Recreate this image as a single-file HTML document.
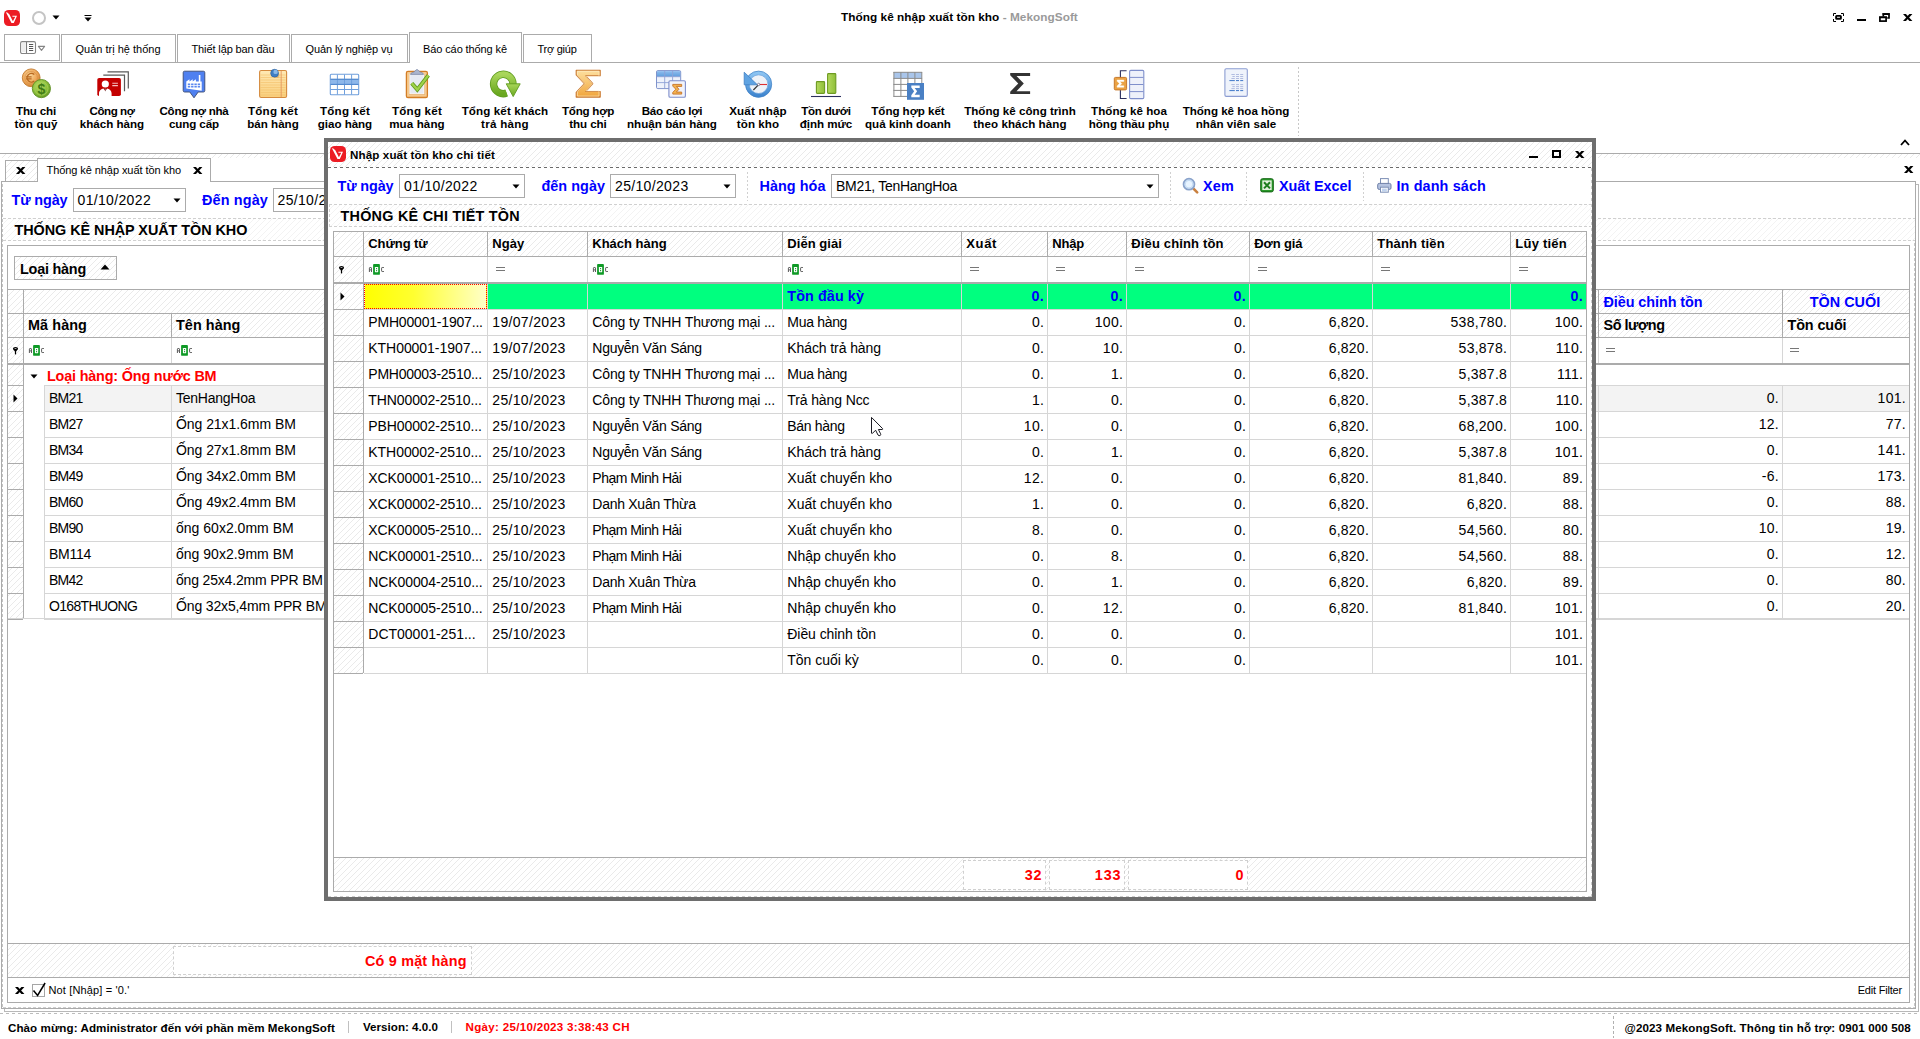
<!DOCTYPE html>
<html><head><meta charset="utf-8"><title>Thống kê nhập xuất tồn kho - MekongSoft</title>
<style>
html,body{margin:0;padding:0;background:#fff;}
body{width:1920px;height:1039px;overflow:hidden;position:relative;font-family:"Liberation Sans",sans-serif;}
#r{position:absolute;left:0;top:0;width:1920px;height:1039px;overflow:hidden;background:#fff;}
#r div,#r span.t,#r svg{position:absolute;box-sizing:border-box;}
span.t{white-space:nowrap;display:block;}
</style></head>
<body><div id="r">
<svg style="left:0;top:0" width="0" height="0"><defs><pattern id="hp" width="6" height="6" patternUnits="userSpaceOnUse"><path d="M0 5h1v1h-1zM1 4h1v1h-1zM2 3h1v1h-1zM3 2h1v1h-1zM4 1h1v1h-1zM5 0h1v1h-1z" fill="#eaeaea" shape-rendering="crispEdges"/></pattern><pattern id="hp2" width="6" height="6" patternUnits="userSpaceOnUse"><path d="M0 5h1v1h-1zM1 4h1v1h-1zM2 3h1v1h-1zM3 2h1v1h-1zM4 1h1v1h-1zM5 0h1v1h-1z" fill="#f3f3f3" shape-rendering="crispEdges"/></pattern></defs></svg>
<svg style="left:4px;top:10px" width="16" height="16" viewBox="0 0 16 16"><rect x="0" y="0" width="16" height="16" rx="4.6" fill="#ec1c24"/><path d="M1.900 2.200L3.300 2.500L5.300 4.200L8.900 11.200L11.300 6.800H8.400V5.800H13.000L9.800 12.900H7.500Z" fill="#fff"/></svg>
<div style="left:32px;top:11px;width:14px;height:14px;border:2px solid #c4c4c4;border-radius:50%"></div>
<svg style="left:52px;top:15px" width="8" height="5" viewBox="0 0 8 5"><path d="M0.5 0.5h7L4 4.5z" fill="#000"/></svg>
<svg style="left:84px;top:14px" width="8" height="8" viewBox="0 0 8 8"><rect x="0.5" y="1" width="7" height="1" fill="#000"/><path d="M0.5 3.5h7L4 7.5z" fill="#000"/></svg>
<span class="t" style="left:841px;top:9.4px;height:17px;line-height:17px;font-size:11.8px;font-weight:bold;color:#000;letter-spacing:0.04px">Thống kê nhập xuất tồn kho<span style="color:#9a9a9a"> - MekongSoft</span></span>
<svg style="left:1830px;top:10px" width="66" height="16" viewBox="1830 10 66 16"><path d="M1833.500 16V13.500H1836M1841 13.500H1843.500V16M1843.500 19V21.500H1841M1836 21.500H1833.500V19" stroke="#000" stroke-width="1" fill="none"/><rect x="1836.100" y="15.900" width="4.800" height="2.900" rx="0.6" fill="none" stroke="#000" stroke-width="1.900"/><rect x="1857" y="19" width="9" height="2" fill="#000"/><path d="M1883.300 16.500V14.200H1889V18H1887.200" stroke="#000" stroke-width="1.700" fill="none"/><path d="M1882.400 13.900H1889.800" stroke="#000" stroke-width="1.400"/><rect x="1879.900" y="17.400" width="6.200" height="3.700" fill="none" stroke="#000" stroke-width="1.700"/><path d="M1879.100 17H1886.900" stroke="#000" stroke-width="1.300"/></svg>
<svg style="left:1901.7px;top:13.0px" width="11.4" height="9.0" viewBox="-5.7 -4.5 11.4 9.0"><path d="M-4.7 -3.5H-1.7299999999999995L4.7 3.5H1.7299999999999995Z" fill="#000"/><path d="M4.7 -3.5H1.7299999999999995L-4.7 3.5H-1.7299999999999995Z" fill="#000"/></svg>
<div style="left:0px;top:62px;width:1920px;height:1px;background:#ababab"></div>
<div style="left:4px;top:34px;width:56px;height:27px;border:1px solid #ababab;background:#fff"></div>
<svg style="left:20px;top:40px" width="28" height="16" viewBox="0 0 28 16"><rect x="0.600" y="1.600" width="14.900" height="11.900" rx="1.600" fill="#fff" stroke="#848484" stroke-width="1.100"/><rect x="2" y="3" width="3.400" height="9" fill="#eeeeee"/><path d="M6.500 2v11" stroke="#7c7c7c" stroke-width="1.100"/><path d="M9 4.500h4.200M9 6.500h4.200M9 8.500h4.200M9 10.500h4.200" stroke="#555" stroke-width="1.100"/><path d="M18.400 6.400h6.200L21.500 10.300z" fill="#fff" stroke="#858585" stroke-width="1.100" stroke-linejoin="round"/></svg>
<div style="left:61px;top:34px;width:115px;height:28px;border:1px solid #ababab;border-bottom:none;background:#fff"></div>
<span class="t" style="top:42.0px;height:15px;line-height:15px;font-size:11px;color:#000;letter-spacing:0.000px;left:75.5px;">Quản trị hệ thống</span>
<div style="left:177px;top:34px;width:113px;height:28px;border:1px solid #ababab;border-bottom:none;background:#fff"></div>
<span class="t" style="top:42.0px;height:15px;line-height:15px;font-size:11px;color:#000;letter-spacing:-0.118px;left:191.5px;">Thiết lập ban đầu</span>
<div style="left:291px;top:34px;width:117px;height:28px;border:1px solid #ababab;border-bottom:none;background:#fff"></div>
<span class="t" style="top:42.0px;height:15px;line-height:15px;font-size:11px;color:#000;letter-spacing:-0.098px;left:305.5px;">Quản lý nghiệp vụ</span>
<div style="left:409px;top:32px;width:113px;height:31px;border:1px solid #ababab;border-bottom:none;background:#fff"></div>
<span class="t" style="top:42.0px;height:15px;line-height:15px;font-size:11px;color:#000;letter-spacing:-0.101px;left:423px;">Báo cáo thống kê</span>
<div style="left:523px;top:34px;width:69px;height:28px;border:1px solid #ababab;border-bottom:none;background:#fff"></div>
<span class="t" style="top:42.0px;height:15px;line-height:15px;font-size:11px;color:#000;letter-spacing:-0.255px;left:537.5px;">Trợ giúp</span>
<span class="t" style="top:103.0px;height:16px;line-height:16px;font-size:11.6px;color:#000;letter-spacing:-0.176px;font-weight:bold;left:16.0px;">Thu chi</span>
<span class="t" style="top:116.0px;height:16px;line-height:16px;font-size:11.6px;color:#000;letter-spacing:0.161px;font-weight:bold;left:14.5px;">tồn quỹ</span>
<span class="t" style="top:103.0px;height:16px;line-height:16px;font-size:11.6px;color:#000;letter-spacing:-0.455px;font-weight:bold;left:89.5px;">Công nợ</span>
<span class="t" style="top:116.0px;height:16px;line-height:16px;font-size:11.6px;color:#000;letter-spacing:-0.015px;font-weight:bold;left:79.85px;">khách hàng</span>
<span class="t" style="top:103.0px;height:16px;line-height:16px;font-size:11.6px;color:#000;letter-spacing:-0.275px;font-weight:bold;left:159.5px;">Công nợ nhà</span>
<span class="t" style="top:116.0px;height:16px;line-height:16px;font-size:11.6px;color:#000;letter-spacing:-0.114px;font-weight:bold;left:169.0px;">cung cấp</span>
<span class="t" style="top:103.0px;height:16px;line-height:16px;font-size:11.6px;color:#000;letter-spacing:0.210px;font-weight:bold;left:248.0px;">Tổng kết</span>
<span class="t" style="top:116.0px;height:16px;line-height:16px;font-size:11.6px;color:#000;letter-spacing:0.019px;font-weight:bold;left:247.15px;">bán hàng</span>
<span class="t" style="top:103.0px;height:16px;line-height:16px;font-size:11.6px;color:#000;letter-spacing:0.210px;font-weight:bold;left:320.0px;">Tổng kết</span>
<span class="t" style="top:116.0px;height:16px;line-height:16px;font-size:11.6px;color:#000;letter-spacing:-0.052px;font-weight:bold;left:317.85px;">giao hàng</span>
<span class="t" style="top:103.0px;height:16px;line-height:16px;font-size:11.6px;color:#000;letter-spacing:0.210px;font-weight:bold;left:392.0px;">Tổng kết</span>
<span class="t" style="top:116.0px;height:16px;line-height:16px;font-size:11.6px;color:#000;letter-spacing:0.115px;font-weight:bold;left:389.15px;">mua hàng</span>
<span class="t" style="top:103.0px;height:16px;line-height:16px;font-size:11.6px;color:#000;letter-spacing:0.117px;font-weight:bold;left:461.65px;">Tổng kết khách</span>
<span class="t" style="top:116.0px;height:16px;line-height:16px;font-size:11.6px;color:#000;letter-spacing:0.281px;font-weight:bold;left:481.0px;">trả hàng</span>
<span class="t" style="top:103.0px;height:16px;line-height:16px;font-size:11.6px;color:#000;letter-spacing:-0.247px;font-weight:bold;left:562.0px;">Tổng hợp</span>
<span class="t" style="top:116.0px;height:16px;line-height:16px;font-size:11.6px;color:#000;letter-spacing:-0.102px;font-weight:bold;left:569.35px;">thu chi</span>
<span class="t" style="top:103.0px;height:16px;line-height:16px;font-size:11.6px;color:#000;letter-spacing:-0.212px;font-weight:bold;left:641.65px;">Báo cáo lợi</span>
<span class="t" style="top:116.0px;height:16px;line-height:16px;font-size:11.6px;color:#000;letter-spacing:0.032px;font-weight:bold;left:627.0px;">nhuận bán hàng</span>
<span class="t" style="top:103.0px;height:16px;line-height:16px;font-size:11.6px;color:#000;letter-spacing:0.182px;font-weight:bold;left:729.15px;">Xuất nhập</span>
<span class="t" style="top:116.0px;height:16px;line-height:16px;font-size:11.6px;color:#000;letter-spacing:0.061px;font-weight:bold;left:736.85px;">tồn kho</span>
<span class="t" style="top:103.0px;height:16px;line-height:16px;font-size:11.6px;color:#000;letter-spacing:-0.216px;font-weight:bold;left:801.15px;">Tồn dưới</span>
<span class="t" style="top:116.0px;height:16px;line-height:16px;font-size:11.6px;color:#000;letter-spacing:-0.071px;font-weight:bold;left:799.85px;">định mức</span>
<span class="t" style="top:103.0px;height:16px;line-height:16px;font-size:11.6px;color:#000;letter-spacing:-0.055px;font-weight:bold;left:871.35px;">Tổng hợp kết</span>
<span class="t" style="top:116.0px;height:16px;line-height:16px;font-size:11.6px;color:#000;letter-spacing:0.022px;font-weight:bold;left:865.0px;">quả kinh doanh</span>
<span class="t" style="top:103.0px;height:16px;line-height:16px;font-size:11.6px;color:#000;letter-spacing:0.012px;font-weight:bold;left:964.15px;">Thống kê công trình</span>
<span class="t" style="top:116.0px;height:16px;line-height:16px;font-size:11.6px;color:#000;letter-spacing:0.077px;font-weight:bold;left:973.35px;">theo khách hàng</span>
<span class="t" style="top:103.0px;height:16px;line-height:16px;font-size:11.6px;color:#000;letter-spacing:0.051px;font-weight:bold;left:1091.0px;">Thống kê hoa</span>
<span class="t" style="top:116.0px;height:16px;line-height:16px;font-size:11.6px;color:#000;letter-spacing:0.014px;font-weight:bold;left:1088.65px;">hồng thầu phụ</span>
<span class="t" style="top:103.0px;height:16px;line-height:16px;font-size:11.6px;color:#000;letter-spacing:-0.015px;font-weight:bold;left:1182.65px;">Thống kê hoa hồng</span>
<span class="t" style="top:116.0px;height:16px;line-height:16px;font-size:11.6px;color:#000;letter-spacing:0.055px;font-weight:bold;left:1195.65px;">nhân viên sale</span>
<div style="left:1298px;top:67px;width:1px;height:69px;background:repeating-linear-gradient(180deg,#c8c8c8 0,#c8c8c8 2px,transparent 2px,transparent 4px)"></div>
<svg style="left:0;top:0" width="0" height="0"><defs>
<radialGradient id="gOr" cx="0.4" cy="0.35" r="0.7"><stop offset="0" stop-color="#fbd9a0"/><stop offset="0.6" stop-color="#eda758"/><stop offset="1" stop-color="#c97a2c"/></radialGradient>
<radialGradient id="gGr" cx="0.4" cy="0.35" r="0.7"><stop offset="0" stop-color="#b9dc6a"/><stop offset="0.6" stop-color="#8cbf3a"/><stop offset="1" stop-color="#5f9420"/></radialGradient>
<linearGradient id="gNote" x1="0" y1="0" x2="0" y2="1"><stop offset="0" stop-color="#ffe9b4"/><stop offset="1" stop-color="#f9cf7c"/></linearGradient>
<linearGradient id="gSig" x1="0" y1="0" x2="0" y2="1"><stop offset="0" stop-color="#fde0a0"/><stop offset="1" stop-color="#f0a43a"/></linearGradient>
<linearGradient id="gGreen" x1="0" y1="0" x2="0" y2="1"><stop offset="0" stop-color="#a9d65a"/><stop offset="1" stop-color="#6aa820"/></linearGradient>
<linearGradient id="gBlue" x1="0" y1="0" x2="0" y2="1"><stop offset="0" stop-color="#8cc4f2"/><stop offset="1" stop-color="#3f86cf"/></linearGradient>
<linearGradient id="gBar" x1="0" y1="0" x2="1" y2="0"><stop offset="0" stop-color="#b4d95e"/><stop offset="1" stop-color="#8fbf38"/></linearGradient>
<linearGradient id="gHdr" x1="0" y1="0" x2="0" y2="1"><stop offset="0" stop-color="#8fbdee"/><stop offset="1" stop-color="#5f9ddc"/></linearGradient>
</defs></svg>
<svg style="left:18px;top:66px" width="40" height="36" viewBox="18 66 40 36"><circle cx="31.2" cy="77.8" r="8.9" fill="url(#gOr)" stroke="#c27a30" stroke-width="0.9"/>
<circle cx="31.2" cy="77.8" r="6.3" fill="none" stroke="#d9924a" stroke-width="0.8"/>
<path d="M34.3 74.6a4.3 4.3 0 1 0 0 6.4M26 76.8h5.6M26 78.9h5.6" stroke="#b96a22" stroke-width="1.3" fill="none"/>
<circle cx="41.4" cy="88.6" r="9.1" fill="url(#gGr)" stroke="#5e8f22" stroke-width="0.9"/>
<circle cx="41.4" cy="88.6" r="6.6" fill="none" stroke="#a4cf55" stroke-width="0.8"/>
<text x="41.4" y="93.6" text-anchor="middle" font-family="Liberation Sans" font-weight="bold" font-size="14" fill="#3f7a14">$</text></svg>
<svg style="left:94px;top:66px" width="40" height="36" viewBox="94 66 40 36"><path d="M107.5 71.9h20.8v16.6" stroke="#5a5a5a" stroke-width="1.2" fill="none"/>
<path d="M103.3 75.2h21.2v16" stroke="#5a5a5a" stroke-width="1.2" fill="none"/>
<rect x="97.3" y="78" width="23.6" height="18" rx="1.8" fill="#c40000"/>
<circle cx="105.3" cy="84" r="3.6" fill="#fff"/>
<path d="M99 96v-2.5c0-3 2.4-4.8 4.4-5l1.9 2.6l1.9-2.6c2 .2 4.4 2 4.4 5v2.5z" fill="#fff"/>
<path d="M104.5 88.6h1.6l-.8 3.2z" fill="#777"/>
<path d="M112.3 83.2h5.6M112.3 85.6h5.6" stroke="#f4c0c0" stroke-width="1.1"/></svg>
<svg style="left:178px;top:66px" width="40" height="36" viewBox="178 66 40 36"><path d="M184.6 71.2h18.8a1.4 1.4 0 0 1 1.4 1.4v18a1.4 1.4 0 0 1 -1.4 1.4h-5.2l-4.2 5.8l-4.2-5.8h-5.2a1.4 1.4 0 0 1 -1.4-1.4v-18a1.4 1.4 0 0 1 1.4-1.4z" fill="#4f80f0" stroke="#3a4a70" stroke-width="0.9"/>
<path d="M186.3 88.6v-7.2l3.2-2.2v2.2l3.2-2.2v2.2l3.2-2.2v2.2h2.9v-6.3h1.6v6.3l1.3 0v9.4z" fill="#fff"/>
<path d="M187.8 83.5h2.4v1.7h-2.4zM191.1 83.5h2.4v1.7h-2.4zM194.4 83.5h2.4v1.7h-2.4zM197.7 83.5h2.4v1.7h-2.4zM187.8 86h2.4v1.5h-2.4zM191.1 86h2.4v1.5h-2.4zM194.4 86h2.4v1.5h-2.4zM197.7 86h2.4v1.5h-2.4z" fill="#5b88f0"/></svg>
<svg style="left:255px;top:66px" width="40" height="36" viewBox="255 66 40 36"><rect x="259.6" y="70.5" width="27" height="27" rx="1.6" fill="url(#gNote)" stroke="#d58a3e" stroke-width="1.1"/>
<path d="M260.5 75h25M260.5 77.5h25M260.5 80h25M260.5 82.5h25M260.5 85h25M260.5 87.5h25M260.5 90h25M260.5 92.5h25M260.5 95h25" stroke="#f3c06a" stroke-width="0.6"/>
<path d="M281.2 71v26" stroke="#e2905a" stroke-width="0.8"/>
<ellipse cx="276.2" cy="75.4" rx="3.2" ry="2.6" fill="#d9a860" opacity="0.6"/>
<circle cx="274.6" cy="73.2" r="3.9" fill="#3f7fc4" stroke="#2f64a2" stroke-width="0.7"/>
<circle cx="275.6" cy="71.9" r="2.2" fill="#8ab9e8"/></svg>
<svg style="left:326px;top:66px" width="40" height="36" viewBox="326 66 40 36"><rect x="330.3" y="74.3" width="28.4" height="20.4" rx="1" fill="#fff" stroke="#6f9fdc" stroke-width="1.1"/>
<rect x="330.9" y="79.3" width="27.2" height="5.1" fill="#8db7ea"/>
<path d="M330.5 79.3h28M330.5 84.4h28M330.5 89.5h28M337.4 74.5v20M344.5 74.5v20M351.6 74.5v20" stroke="#6f9fdc" stroke-width="1"/>
<path d="M330.5 79.3h28M330.5 84.4h28" stroke="#4f86cc" stroke-width="1"/></svg>
<svg style="left:400px;top:66px" width="40" height="36" viewBox="400 66 40 36"><rect x="406.4" y="71.3" width="21" height="26.2" rx="1.6" fill="#f6c98c" stroke="#d37d26" stroke-width="1.3"/>
<rect x="409" y="74" width="15.8" height="20.6" fill="#d99a52"/>
<rect x="409.8" y="74.2" width="14.2" height="19.6" fill="#e6eaf3" stroke="#fff" stroke-width="0.8"/>
<path d="M410.400 74.400c0.200-1.800 3-1.900 4.200-2.900c.8-.7 1.200-1.900 2.400-1.900s1.600 1.200 2.400 1.900c1.200 1 4 1.100 4.200 2.900z" fill="#aab5ce" stroke="#7683a3" stroke-width="0.7"/>
<path d="M411.800 83.300L417.300 89.600L428.300 75.400" stroke="#5f9a1c" stroke-width="4" fill="none" stroke-linejoin="miter"/>
<path d="M411.800 83.300L417.300 89.600L428.300 75.400" stroke="#9fd24a" stroke-width="2.3" fill="none" stroke-linejoin="miter"/></svg>
<svg style="left:486px;top:66px" width="40" height="36" viewBox="486 66 40 36"><path d="M513 84a9.700 9.700 0 1 0 -6.400 9.100" stroke="#5d9a1e" stroke-width="7.400" fill="none"/>
<path d="M513 84a9.700 9.700 0 1 0 -6.400 9.100" stroke="url(#gGreen)" stroke-width="5.800" fill="none"/>
<path d="M506.2 83.800h14.000L513.200 96.600z" fill="url(#gGreen)" stroke="#5d9a1e" stroke-width="0.9"/></svg>
<svg style="left:572px;top:66px" width="40" height="36" viewBox="572 66 40 36"><path transform="translate(576.2 70.2)" d="M0 0H24V5.600H9.600L16.600 13.400L9.600 21.300H24V26.900H0V22.200L8.200 13.400L0 4.700Z" fill="url(#gSig)" stroke="#c8762c" stroke-width="1.1" stroke-linejoin="round"/><path transform="translate(577.4 71.3) scale(0.9 0.92)" d="M0 0H24V5.600H9.600L16.600 13.400L9.600 21.300H24V26.900H0V22.200L8.200 13.400L0 4.700Z" fill="none" stroke="#fff0cc" stroke-width="0.8" opacity="0.8"/></svg>
<svg style="left:652px;top:66px" width="40" height="36" viewBox="652 66 40 36"><rect x="656.5" y="70.600" width="24.200" height="18" rx="1.300" fill="#eef2fb" stroke="#7f93cc" stroke-width="1"/>
<path d="M657 71.100h23.200v5.600H657z" fill="url(#gHdr)"/>
<path d="M657 76.700h23.200M657 82.600h23.200M664.700 71v17M672.600 71v17" stroke="#8fa3d6" stroke-width="0.9"/>
<rect x="668.900" y="80.800" width="16.500" height="16.500" rx="1.300" fill="#f1f3fb" stroke="#7f8fcb" stroke-width="1.100"/>
<path transform="translate(672.8 84.4) scale(0.37 0.36)" d="M0 0H24V5.600H9.600L16.600 13.400L9.600 21.300H24V26.900H0V22.200L8.200 13.400L0 4.700Z" fill="#f3b24e" stroke="#c8762c" stroke-width="2.600"/></svg>
<svg style="left:740px;top:66px" width="40" height="36" viewBox="740 66 40 36"><circle cx="758.6" cy="84.200" r="11.300" fill="#eef2f8" stroke="url(#gBlue)" stroke-width="3.800"/>
<circle cx="758.6" cy="84.200" r="13.100" fill="none" stroke="#3f7fc4" stroke-width="0.7"/>
<circle cx="758.6" cy="84.200" r="9.300" fill="none" stroke="#5a97d6" stroke-width="0.6"/>
<path d="M744.2 72.200V84.800H757.400z" fill="#5fa3e2" stroke="#3f7fc4" stroke-width="0.8" stroke-linejoin="round"/>
<path d="M758.600 84.600L753.400 90" stroke="#333" stroke-width="1.200"/>
<path d="M758.600 84.500H767" stroke="#e03030" stroke-width="1.100"/>
<circle cx="758.600" cy="84.500" r="1.200" fill="#fff" stroke="#446" stroke-width="0.6"/></svg>
<svg style="left:808px;top:66px" width="40" height="36" viewBox="808 66 40 36"><rect x="816.400" y="81.600" width="8.200" height="11.800" rx="0.8" fill="url(#gBar)" stroke="#6e9a22" stroke-width="1.100"/>
<rect x="827.600" y="73.600" width="8.200" height="19.800" rx="0.8" fill="url(#gBar)" stroke="#6e9a22" stroke-width="1.100"/>
<path d="M811 96.500h30" stroke="#2b2f5e" stroke-width="1.100"/></svg>
<svg style="left:890px;top:66px" width="40" height="38" viewBox="890 66 40 38"><rect x="893.9" y="72.300" width="27.900" height="6" fill="#a9c5ea"/>
<path d="M893.4 72.300h28.700M893.400 78.400h28.700M893.400 84.400h14M893.400 90.400h14M893.400 96.400h14M893.900 72v24.700M900.900 72v24.700M907.900 72v11M914.900 72v11M921.800 72v11" stroke="#8a8a8a" stroke-width="1" fill="none"/>
<rect x="907" y="83" width="17" height="16.800" fill="#4a80c4"/>
<path transform="translate(911.3 85.600) scale(0.35 0.43)" d="M0 0H24V5.600H9.600L16.600 13.400L9.600 21.300H24V26.900H0V22.200L8.200 13.400L0 4.700Z" fill="#fff"/></svg>
<svg style="left:1004px;top:66px" width="40" height="36" viewBox="1004 66 40 36"><path transform="translate(1010.2 73.100) scale(0.83 0.775)" d="M0 0H24V3.600H7.600L16.400 13.400L7.600 23.300H24V26.900H0V24L9.700 13.400L0 2.900Z" fill="#333"/></svg>
<svg style="left:1110px;top:66px" width="40" height="36" viewBox="1110 66 40 36"><rect x="1129.600" y="70.400" width="14.200" height="28.200" rx="1.200" fill="#eef1fa" stroke="#7f8fcb" stroke-width="1.100"/>
<path d="M1130 77.400h13.400M1130 84.500h13.400M1130 91.600h13.400" stroke="#7f8fcb" stroke-width="1"/>
<path d="M1126.600 70.800h-6.200v27.700h6.200" stroke="#2b2f5e" stroke-width="1.100" fill="none"/>
<rect x="1114.300" y="77.400" width="12.300" height="12.500" rx="1.200" fill="#eaa244" stroke="#c8782a" stroke-width="1"/>
<path transform="translate(1117.1 80) scale(0.28 0.27)" d="M0 0H24V5.600H9.600L16.600 13.400L9.600 21.300H24V26.900H0V22.200L8.200 13.400L0 4.700Z" fill="#fff" stroke="#fff" stroke-width="1.5"/></svg>
<svg style="left:1220px;top:66px" width="40" height="36" viewBox="1220 66 40 36"><rect x="1224.900" y="68.800" width="22.400" height="27.600" rx="1.300" fill="#eff3fb" stroke="#8c9dd2" stroke-width="1.100"/>
<path d="M1231.400 74.500h3.400M1236 74.500h3M1240.200 74.500h3M1232.400 76.500h2.400M1236 76.500h3M1240.200 76.500h3M1231.400 78.500h3.400M1236 78.500h3M1240.200 78.500h3M1231.400 84.600h3.400M1236 84.600h3M1240.200 84.600h3M1232.400 86.600h2.400M1236 86.600h3M1240.200 86.600h3M1231.400 88.600h3.400M1236 88.600h3M1240.200 88.600h3" stroke="#a9b6dc" stroke-width="0.9"/>
<path d="M1229.400 80.600h5.400M1236 80.600h3M1240.200 80.600h3M1229.400 90.600h5.400M1236 90.600h3M1240.200 90.600h3" stroke="#3f78c8" stroke-width="1"/></svg>
<svg style="left:1900px;top:139px" width="10" height="7" viewBox="0 0 10 7"><path d="M1 6L5 1.5L9 6" stroke="#000" stroke-width="1.8" fill="none"/></svg>
<div style="left:0px;top:153px;width:1920px;height:1px;background:#ababab"></div>
<svg style="left:0px;top:154px;" width="1920" height="4"><rect width="1920" height="4" fill="#fff"/><rect width="1920" height="4" fill="url(#hp)"/></svg>
<div style="left:1px;top:181px;width:1915px;height:828px;border:1px solid #ababab;background:#fff"></div>
<div style="left:5px;top:160px;width:33px;height:21px;border:1px solid #ababab;border-bottom:none"></div>
<svg style="left:6px;top:161px;" width="31" height="20"><rect width="31" height="20" fill="#fff"/><rect width="31" height="20" fill="url(#hp)"/></svg>
<svg style="left:15.3px;top:166.0px" width="11.4" height="9.0" viewBox="-5.7 -4.5 11.4 9.0"><path d="M-4.7 -3.5H-1.7299999999999995L4.7 3.5H1.7299999999999995Z" fill="#000"/><path d="M4.7 -3.5H1.7299999999999995L-4.7 3.5H-1.7299999999999995Z" fill="#000"/></svg>
<div style="left:37px;top:158px;width:174px;height:24px;border:1px solid #ababab;border-bottom:none;background:#fff"></div>
<span class="t" style="top:162.5px;height:15px;line-height:15px;font-size:11px;color:#000;letter-spacing:-0.072px;left:46.5px;">Thống kê nhập xuất tồn kho</span>
<svg style="left:192.3px;top:166.0px" width="11.4" height="9.0" viewBox="-5.7 -4.5 11.4 9.0"><path d="M-4.7 -3.5H-1.7299999999999995L4.7 3.5H1.7299999999999995Z" fill="#000"/><path d="M4.7 -3.5H1.7299999999999995L-4.7 3.5H-1.7299999999999995Z" fill="#000"/></svg>
<svg style="left:1903.3px;top:165.0px" width="11.4" height="9.0" viewBox="-5.7 -4.5 11.4 9.0"><path d="M-4.7 -3.5H-1.7299999999999995L4.7 3.5H1.7299999999999995Z" fill="#000"/><path d="M4.7 -3.5H1.7299999999999995L-4.7 3.5H-1.7299999999999995Z" fill="#000"/></svg>
<div style="left:1914px;top:218px;width:1px;height:788px;background:repeating-linear-gradient(180deg,#c8c8c8 0,#c8c8c8 3px,transparent 3px,transparent 5px)"></div>
<div style="left:1918px;top:184px;width:1px;height:827px;background:#b8b8b8"></div>
<div style="left:1916px;top:184px;width:3px;height:1px;background:#b8b8b8"></div>
<span class="t" style="top:190.0px;height:20px;line-height:20px;font-size:14.4px;color:#0000ff;letter-spacing:-0.118px;font-weight:bold;left:11.5px;">Từ ngày</span>
<div style="left:73px;top:188px;width:113px;height:24px;border:1px solid #ababab;background:#fff"></div>
<span class="t" style="top:189.8px;height:20px;line-height:20px;font-size:14px;color:#000;letter-spacing:0.344px;left:77.5px;">01/10/2022</span>
<svg style="left:173px;top:198px" width="8" height="5" viewBox="0 0 8 5"><path d="M0.5 0.5h7L4 4.5z" fill="#000"/></svg>
<span class="t" style="top:190.0px;height:20px;line-height:20px;font-size:14.4px;color:#0000ff;letter-spacing:0.150px;font-weight:bold;left:202px;">Đến ngày</span>
<div style="left:273px;top:188px;width:113px;height:24px;border:1px solid #ababab;background:#fff"></div>
<span class="t" style="top:189.8px;height:20px;line-height:20px;font-size:14px;color:#000;letter-spacing:0.344px;left:277.5px;">25/10/2023</span>
<svg style="left:3px;top:218px;" width="1912" height="23"><rect width="1912" height="23" fill="#fff"/><rect width="1912" height="23" fill="url(#hp2)"/></svg>
<div style="left:3px;top:218px;width:1912px;height:1px;background:repeating-linear-gradient(90deg,#d0d0d0 0,#d0d0d0 3px,transparent 3px,transparent 5px)"></div>
<div style="left:3px;top:240px;width:1912px;height:1px;background:repeating-linear-gradient(90deg,#d0d0d0 0,#d0d0d0 3px,transparent 3px,transparent 5px)"></div>
<span class="t" style="top:220.0px;height:20px;line-height:20px;font-size:14.4px;color:#000;letter-spacing:-0.044px;font-weight:bold;left:14.5px;">THỐNG KÊ NHẬP XUẤT TỒN KHO</span>
<div style="left:2px;top:184px;width:1px;height:823px;background:repeating-linear-gradient(180deg,#c4c4c4 0,#c4c4c4 3px,transparent 3px,transparent 5px)"></div>
<div style="left:7px;top:245px;width:1903px;height:758px;border:1px solid #ababab;background:#fff"></div>
<div style="left:14px;top:256px;width:103px;height:24px;border:1px solid #ababab"></div>
<svg style="left:15px;top:257px;" width="101" height="22"><rect width="101" height="22" fill="#fff"/><rect width="101" height="22" fill="url(#hp)"/></svg>
<span class="t" style="top:258.5px;height:20px;line-height:20px;font-size:14.4px;color:#000;letter-spacing:-0.221px;font-weight:bold;left:20px;">Loại hàng</span>
<svg style="left:100px;top:264px" width="10" height="6" viewBox="0 0 10 6"><path d="M0.5 5.5h9L5 0.5z" fill="#000"/></svg>
<div style="left:8px;top:289px;width:1901px;height:1px;background:#ababab"></div>
<svg style="left:8px;top:290px;" width="1901" height="47"><rect width="1901" height="47" fill="#fff"/><rect width="1901" height="47" fill="url(#hp)"/></svg>
<div style="left:8px;top:313px;width:1901px;height:1px;background:#ababab"></div>
<div style="left:8px;top:337px;width:1901px;height:1px;background:#ababab"></div>
<div style="left:8px;top:363px;width:1901px;height:2px;background:#ababab"></div>
<svg style="left:8px;top:338px;" width="15" height="280"><rect width="15" height="280" fill="#fff"/><rect width="15" height="280" fill="url(#hp)"/></svg>
<div style="left:8px;top:363px;width:15px;height:2px;background:#ababab"></div>
<div style="left:23px;top:290px;width:1px;height:328px;background:#ababab"></div>
<div style="left:171px;top:314px;width:1px;height:23px;background:#ababab"></div>
<div style="left:1782px;top:290px;width:1px;height:47px;background:#ababab"></div>
<div style="left:171px;top:338px;width:1px;height:25px;background:#d6d6d6"></div>
<div style="left:1598px;top:290px;width:1px;height:47px;background:#ababab"></div>
<div style="left:1598px;top:338px;width:1px;height:25px;background:#d6d6d6"></div>
<div style="left:1782px;top:338px;width:1px;height:25px;background:#d6d6d6"></div>
<span class="t" style="top:315.0px;height:20px;line-height:20px;font-size:14.4px;color:#000;letter-spacing:0.087px;font-weight:bold;left:28px;">Mã hàng</span>
<span class="t" style="top:315.0px;height:20px;line-height:20px;font-size:14.4px;color:#000;letter-spacing:0.064px;font-weight:bold;left:176px;">Tên hàng</span>
<span class="t" style="top:292.0px;height:20px;line-height:20px;font-size:14.4px;color:#0000ff;letter-spacing:-0.070px;font-weight:bold;left:1603.5px;">Điều chỉnh tồn</span>
<span class="t" style="top:292.0px;height:20px;line-height:20px;font-size:14.4px;color:#0000ff;font-weight:bold;left:1545px;width:600px;text-align:center;">TỒN CUỐI</span>
<span class="t" style="top:315.3px;height:20px;line-height:20px;font-size:14.4px;color:#000;letter-spacing:-0.457px;font-weight:bold;left:1603.5px;">Số lượng</span>
<span class="t" style="top:315.3px;height:20px;line-height:20px;font-size:14.4px;color:#000;letter-spacing:-0.122px;font-weight:bold;left:1787.5px;">Tồn cuối</span>
<svg style="left:12.2px;top:345.8px" width="8" height="10" viewBox="-1 -1 8 10"><ellipse cx="2.500" cy="1.600" rx="2.600" ry="1.700" fill="#000"/><path d="M0.200 2.200H4.800L2.500 5.200Z" fill="#000"/><rect x="1.900" y="3" width="1.200" height="4.400" fill="#000"/><ellipse cx="2.500" cy="1.400" rx="1.300" ry="0.450" fill="#fff"/></svg>
<svg style="left:27.6px;top:344.1px" width="18" height="13" viewBox="0 0 18 13"><rect x="5.100" y="1.100" width="6.800" height="10.700" rx="0.9" fill="#0f9a26"/><rect x="6.900" y="4" width="3.300" height="5.200" rx="0.4" fill="#fff"/><rect x="8" y="5.100" width="1.100" height="1.100" fill="#0f9a26"/><rect x="8" y="7.100" width="1.100" height="1.100" fill="#0f9a26"/><path d="M1.400 9V5.100Q1.400 4.500 2 4.500H2.900Q3.500 4.500 3.500 5.100V9M1.400 6.900H3.500" stroke="#5c5c5c" stroke-width="1" fill="none"/><path d="M15.900 4.500H14.200Q13.600 4.500 13.600 5.100V7.900Q13.600 8.500 14.200 8.500H15.900" stroke="#5c5c5c" stroke-width="1" fill="none"/></svg>
<svg style="left:175.6px;top:344.1px" width="18" height="13" viewBox="0 0 18 13"><rect x="5.100" y="1.100" width="6.800" height="10.700" rx="0.9" fill="#0f9a26"/><rect x="6.900" y="4" width="3.300" height="5.200" rx="0.4" fill="#fff"/><rect x="8" y="5.100" width="1.100" height="1.100" fill="#0f9a26"/><rect x="8" y="7.100" width="1.100" height="1.100" fill="#0f9a26"/><path d="M1.400 9V5.100Q1.400 4.500 2 4.500H2.900Q3.500 4.500 3.500 5.100V9M1.400 6.900H3.500" stroke="#5c5c5c" stroke-width="1" fill="none"/><path d="M15.900 4.500H14.200Q13.600 4.500 13.600 5.100V7.900Q13.600 8.500 14.200 8.500H15.900" stroke="#5c5c5c" stroke-width="1" fill="none"/></svg>
<div style="left:1606px;top:348px;width:9px;height:1px;background:#777"></div><div style="left:1606px;top:351px;width:9px;height:1px;background:#777"></div>
<div style="left:1790px;top:348px;width:9px;height:1px;background:#777"></div><div style="left:1790px;top:351px;width:9px;height:1px;background:#777"></div>
<svg style="left:8px;top:365px;" width="15" height="21"><rect width="15" height="21" fill="#fff"/><rect width="15" height="21" fill="url(#hp)"/></svg>
<div style="left:23px;top:365px;width:1px;height:253px;background:#ababab"></div>
<svg style="left:30px;top:374px" width="8" height="5" viewBox="0 0 8 5"><path d="M0.5 0.5h7L4 4.5z" fill="#000"/></svg>
<span class="t" style="top:366.0px;height:20px;line-height:20px;font-size:14.4px;color:#ff0000;letter-spacing:-0.179px;font-weight:bold;left:47px;">Loại hàng: Ống nước BM</span>
<div style="left:44px;top:385px;width:1865px;height:1px;background:#d6d6d6"></div>
<div style="left:8px;top:385px;width:15px;height:1px;background:#ababab"></div>
<div style="left:44px;top:386px;width:1865px;height:25px;background:#f3f3f3"></div>
<div style="left:44px;top:411px;width:1865px;height:1px;background:#d6d6d6"></div>
<div style="left:8px;top:411px;width:15px;height:1px;background:#ababab"></div>
<span class="t" style="top:387.8px;height:20px;line-height:20px;font-size:14px;color:#000;letter-spacing:-0.769px;left:49px;">BM21</span>
<span class="t" style="top:387.8px;height:20px;line-height:20px;font-size:14px;color:#000;letter-spacing:-0.241px;left:176px;">TenHangHoa</span>
<span class="t" style="top:388.2px;height:20px;line-height:20px;font-size:14px;color:#000;right:141.4000000000001px;text-align:right;letter-spacing:0.25px;margin-right:-0.25px;">0.</span>
<span class="t" style="top:388.2px;height:20px;line-height:20px;font-size:14px;color:#000;right:14.400000000000091px;text-align:right;letter-spacing:0.25px;margin-right:-0.25px;">101.</span>
<div style="left:44px;top:437px;width:1865px;height:1px;background:#d6d6d6"></div>
<div style="left:8px;top:437px;width:15px;height:1px;background:#ababab"></div>
<span class="t" style="top:413.8px;height:20px;line-height:20px;font-size:14px;color:#000;letter-spacing:-0.769px;left:49px;">BM27</span>
<span class="t" style="top:413.8px;height:20px;line-height:20px;font-size:14px;color:#000;letter-spacing:-0.054px;left:176px;">Ống 21x1.6mm BM</span>
<span class="t" style="top:414.2px;height:20px;line-height:20px;font-size:14px;color:#000;right:141.4000000000001px;text-align:right;letter-spacing:0.25px;margin-right:-0.25px;">12.</span>
<span class="t" style="top:414.2px;height:20px;line-height:20px;font-size:14px;color:#000;right:14.400000000000091px;text-align:right;letter-spacing:0.25px;margin-right:-0.25px;">77.</span>
<div style="left:44px;top:463px;width:1865px;height:1px;background:#d6d6d6"></div>
<div style="left:8px;top:463px;width:15px;height:1px;background:#ababab"></div>
<span class="t" style="top:439.8px;height:20px;line-height:20px;font-size:14px;color:#000;letter-spacing:-0.769px;left:49px;">BM34</span>
<span class="t" style="top:439.8px;height:20px;line-height:20px;font-size:14px;color:#000;letter-spacing:-0.054px;left:176px;">Ống 27x1.8mm BM</span>
<span class="t" style="top:440.2px;height:20px;line-height:20px;font-size:14px;color:#000;right:141.4000000000001px;text-align:right;letter-spacing:0.25px;margin-right:-0.25px;">0.</span>
<span class="t" style="top:440.2px;height:20px;line-height:20px;font-size:14px;color:#000;right:14.400000000000091px;text-align:right;letter-spacing:0.25px;margin-right:-0.25px;">141.</span>
<div style="left:44px;top:489px;width:1865px;height:1px;background:#d6d6d6"></div>
<div style="left:8px;top:489px;width:15px;height:1px;background:#ababab"></div>
<span class="t" style="top:465.8px;height:20px;line-height:20px;font-size:14px;color:#000;letter-spacing:-0.769px;left:49px;">BM49</span>
<span class="t" style="top:465.8px;height:20px;line-height:20px;font-size:14px;color:#000;letter-spacing:-0.054px;left:176px;">Ống 34x2.0mm BM</span>
<span class="t" style="top:466.2px;height:20px;line-height:20px;font-size:14px;color:#000;right:141.4000000000001px;text-align:right;letter-spacing:0.25px;margin-right:-0.25px;">-6.</span>
<span class="t" style="top:466.2px;height:20px;line-height:20px;font-size:14px;color:#000;right:14.400000000000091px;text-align:right;letter-spacing:0.25px;margin-right:-0.25px;">173.</span>
<div style="left:44px;top:515px;width:1865px;height:1px;background:#d6d6d6"></div>
<div style="left:8px;top:515px;width:15px;height:1px;background:#ababab"></div>
<span class="t" style="top:491.8px;height:20px;line-height:20px;font-size:14px;color:#000;letter-spacing:-0.769px;left:49px;">BM60</span>
<span class="t" style="top:491.8px;height:20px;line-height:20px;font-size:14px;color:#000;letter-spacing:-0.054px;left:176px;">Ống 49x2.4mm BM</span>
<span class="t" style="top:492.2px;height:20px;line-height:20px;font-size:14px;color:#000;right:141.4000000000001px;text-align:right;letter-spacing:0.25px;margin-right:-0.25px;">0.</span>
<span class="t" style="top:492.2px;height:20px;line-height:20px;font-size:14px;color:#000;right:14.400000000000091px;text-align:right;letter-spacing:0.25px;margin-right:-0.25px;">88.</span>
<div style="left:44px;top:541px;width:1865px;height:1px;background:#d6d6d6"></div>
<div style="left:8px;top:541px;width:15px;height:1px;background:#ababab"></div>
<span class="t" style="top:517.8px;height:20px;line-height:20px;font-size:14px;color:#000;letter-spacing:-0.769px;left:49px;">BM90</span>
<span class="t" style="top:517.8px;height:20px;line-height:20px;font-size:14px;color:#000;letter-spacing:0.013px;left:176px;">ống 60x2.0mm BM</span>
<span class="t" style="top:518.2px;height:20px;line-height:20px;font-size:14px;color:#000;right:141.4000000000001px;text-align:right;letter-spacing:0.25px;margin-right:-0.25px;">10.</span>
<span class="t" style="top:518.2px;height:20px;line-height:20px;font-size:14px;color:#000;right:14.400000000000091px;text-align:right;letter-spacing:0.25px;margin-right:-0.25px;">19.</span>
<div style="left:44px;top:567px;width:1865px;height:1px;background:#d6d6d6"></div>
<div style="left:8px;top:567px;width:15px;height:1px;background:#ababab"></div>
<span class="t" style="top:543.8px;height:20px;line-height:20px;font-size:14px;color:#000;letter-spacing:-0.244px;left:49px;">BM114</span>
<span class="t" style="top:543.8px;height:20px;line-height:20px;font-size:14px;color:#000;letter-spacing:0.013px;left:176px;">ống 90x2.9mm BM</span>
<span class="t" style="top:544.2px;height:20px;line-height:20px;font-size:14px;color:#000;right:141.4000000000001px;text-align:right;letter-spacing:0.25px;margin-right:-0.25px;">0.</span>
<span class="t" style="top:544.2px;height:20px;line-height:20px;font-size:14px;color:#000;right:14.400000000000091px;text-align:right;letter-spacing:0.25px;margin-right:-0.25px;">12.</span>
<div style="left:44px;top:593px;width:1865px;height:1px;background:#d6d6d6"></div>
<div style="left:8px;top:593px;width:15px;height:1px;background:#ababab"></div>
<span class="t" style="top:569.8px;height:20px;line-height:20px;font-size:14px;color:#000;letter-spacing:-0.769px;left:49px;">BM42</span>
<span class="t" style="top:569.8px;height:20px;line-height:20px;font-size:14px;color:#000;letter-spacing:-0.178px;left:176px;">ống 25x4.2mm PPR BM</span>
<span class="t" style="top:570.2px;height:20px;line-height:20px;font-size:14px;color:#000;right:141.4000000000001px;text-align:right;letter-spacing:0.25px;margin-right:-0.25px;">0.</span>
<span class="t" style="top:570.2px;height:20px;line-height:20px;font-size:14px;color:#000;right:14.400000000000091px;text-align:right;letter-spacing:0.25px;margin-right:-0.25px;">80.</span>
<div style="left:44px;top:619px;width:1865px;height:1px;background:#d6d6d6"></div>
<div style="left:8px;top:619px;width:15px;height:1px;background:#ababab"></div>
<span class="t" style="top:595.8px;height:20px;line-height:20px;font-size:14px;color:#000;letter-spacing:-0.681px;left:49px;">O168THUONG</span>
<span class="t" style="top:595.8px;height:20px;line-height:20px;font-size:14px;color:#000;letter-spacing:-0.147px;left:176px;">Ống 32x5,4mm PPR BM</span>
<span class="t" style="top:596.2px;height:20px;line-height:20px;font-size:14px;color:#000;right:141.4000000000001px;text-align:right;letter-spacing:0.25px;margin-right:-0.25px;">0.</span>
<span class="t" style="top:596.2px;height:20px;line-height:20px;font-size:14px;color:#000;right:14.400000000000091px;text-align:right;letter-spacing:0.25px;margin-right:-0.25px;">20.</span>
<div style="left:44px;top:386px;width:1px;height:232px;background:#d6d6d6"></div>
<div style="left:171px;top:386px;width:1px;height:232px;background:#d6d6d6"></div>
<div style="left:1782px;top:386px;width:1px;height:232px;background:#d6d6d6"></div>
<div style="left:1598px;top:386px;width:1px;height:232px;background:#d6d6d6"></div>
<div style="left:8px;top:618px;width:1901px;height:1px;background:#d6d6d6"></div>
<svg style="left:13px;top:394px" width="5" height="9" viewBox="0 0 5 9"><path d="M0.5 0.5v8L4.5 4.5z" fill="#000"/></svg>
<div style="left:8px;top:943px;width:1901px;height:1px;background:#ababab"></div>
<svg style="left:8px;top:944px;" width="1901" height="33"><rect width="1901" height="33" fill="#fff"/><rect width="1901" height="33" fill="url(#hp)"/></svg>
<div style="left:8px;top:977px;width:1901px;height:1px;background:#ababab"></div>
<div style="left:173px;top:946px;width:299px;height:29px;background:#fff;border:1px dashed #d0d0d0"></div>
<span class="t" style="top:951.0px;height:20px;line-height:20px;font-size:14.4px;color:#ff0000;letter-spacing:0.192px;font-weight:bold;left:365px;">Có 9 mặt hàng</span>
<svg style="left:13.7px;top:985.9px" width="11.4" height="9.0" viewBox="-5.7 -4.5 11.4 9.0"><path d="M-4.7 -3.5H-1.7299999999999995L4.7 3.5H1.7299999999999995Z" fill="#000"/><path d="M4.7 -3.5H1.7299999999999995L-4.7 3.5H-1.7299999999999995Z" fill="#000"/></svg>
<div style="left:32px;top:984px;width:13px;height:13px;border:1px solid #a6a6a6;background:#fff"></div>
<svg style="left:32px;top:981px" width="15" height="17" viewBox="32 981 15 17"><path d="M33.500 990.400L37.600 995.400L45.100 983" stroke="#000" stroke-width="1.500" fill="none"/></svg>
<span class="t" style="top:982.5px;height:15px;line-height:15px;font-size:11px;color:#000;letter-spacing:0.148px;left:48.5px;">Not [Nhập] = &#x27;0.&#x27;</span>
<span class="t" style="top:983.0px;height:15px;line-height:15px;font-size:11px;color:#000;letter-spacing:-0.196px;left:1857.7px;">Edit Filter</span>
<div style="left:3px;top:1007px;width:1912px;height:1px;background:repeating-linear-gradient(90deg,#d0d0d0 0,#d0d0d0 3px,transparent 3px,transparent 5px)"></div>
<div style="left:4px;top:1011px;width:1915px;height:1px;background:#b8b8b8"></div>
<div style="left:4px;top:1009px;width:1px;height:2px;background:#b8b8b8"></div>
<div style="left:0px;top:1013px;width:1920px;height:1px;background:repeating-linear-gradient(90deg,#bcbcbc 0,#bcbcbc 3px,transparent 3px,transparent 6px)"></div>
<span class="t" style="top:1019.5px;height:16px;line-height:16px;font-size:11.6px;color:#000;letter-spacing:0.065px;font-weight:bold;left:8px;">Chào mừng: Administrator đến với phần mềm MekongSoft</span>
<div style="left:348px;top:1021px;width:1px;height:12px;background:#c0c0c0"></div>
<span class="t" style="top:1019.0px;height:16px;line-height:16px;font-size:11.6px;color:#000;letter-spacing:0.015px;font-weight:bold;left:363px;">Version: 4.0.0</span>
<div style="left:451px;top:1021px;width:1px;height:12px;background:#c0c0c0"></div>
<span class="t" style="top:1019.0px;height:16px;line-height:16px;font-size:11.6px;color:#ff0000;letter-spacing:0.290px;font-weight:bold;left:465.5px;">Ngày: 25/10/2023 3:38:43 CH</span>
<div style="left:1613px;top:1016px;width:1px;height:22px;background:repeating-linear-gradient(180deg,#b0b0b0 0,#b0b0b0 3px,transparent 3px,transparent 5px)"></div>
<span class="t" style="top:1019.5px;height:16px;line-height:16px;font-size:11.6px;color:#000;letter-spacing:0.110px;font-weight:bold;left:1624.5px;">@2023 MekongSoft. Thông tin hỗ trợ: 0901 000 508</span>
<div style="left:324px;top:138px;width:1272px;height:763px;background:#6e6e6e"></div>
<div style="left:328px;top:142px;width:1264px;height:755px;background:#fff"></div>
<svg style="left:328px;top:142px;" width="1264" height="25"><rect width="1264" height="25" fill="#fff"/><rect width="1264" height="25" fill="url(#hp)"/></svg>
<div style="left:328px;top:167px;width:1264px;height:1px;background:repeating-linear-gradient(90deg,#6a6a6a 0,#6a6a6a 3px,transparent 3px,transparent 6px)"></div>
<svg style="left:330px;top:146px" width="16" height="16" viewBox="0 0 16 16"><rect x="0" y="0" width="16" height="16" rx="4.6" fill="#ec1c24"/><path d="M1.900 2.200L3.300 2.500L5.300 4.200L8.900 11.200L11.300 6.800H8.400V5.800H13.000L9.800 12.900H7.500Z" fill="#fff"/></svg>
<span class="t" style="top:146.5px;height:16px;line-height:16px;font-size:11.6px;color:#000;letter-spacing:0.125px;font-weight:bold;left:350px;">Nhập xuất tồn kho chi tiết</span>
<div style="left:1529px;top:156px;width:9px;height:2px;background:#000"></div>
<div style="left:1552px;top:150px;width:9px;height:8px;border:2px solid #000"></div>
<svg style="left:1573.7px;top:149.9px" width="11.4" height="9.0" viewBox="-5.7 -4.5 11.4 9.0"><path d="M-4.7 -3.5H-1.7299999999999995L4.7 3.5H1.7299999999999995Z" fill="#000"/><path d="M4.7 -3.5H1.7299999999999995L-4.7 3.5H-1.7299999999999995Z" fill="#000"/></svg>
<span class="t" style="top:175.5px;height:20px;line-height:20px;font-size:14.4px;color:#0000ff;letter-spacing:-0.118px;font-weight:bold;left:337.5px;">Từ ngày</span>
<div style="left:399px;top:174px;width:126px;height:24px;border:1px solid #ababab;background:#fff"></div>
<span class="t" style="top:175.8px;height:20px;line-height:20px;font-size:14px;color:#000;letter-spacing:0.344px;left:404px;">01/10/2022</span>
<svg style="left:512px;top:184px" width="8" height="5" viewBox="0 0 8 5"><path d="M0.5 0.5h7L4 4.5z" fill="#000"/></svg>
<span class="t" style="top:175.5px;height:20px;line-height:20px;font-size:14.4px;color:#0000ff;letter-spacing:0.038px;font-weight:bold;left:541.5px;">đến ngày</span>
<div style="left:610px;top:174px;width:126px;height:24px;border:1px solid #ababab;background:#fff"></div>
<span class="t" style="top:175.8px;height:20px;line-height:20px;font-size:14px;color:#000;letter-spacing:0.344px;left:615px;">25/10/2023</span>
<svg style="left:723px;top:184px" width="8" height="5" viewBox="0 0 8 5"><path d="M0.5 0.5h7L4 4.5z" fill="#000"/></svg>
<div style="left:747px;top:172px;width:1px;height:29px;background:repeating-linear-gradient(180deg,#d0d0d0 0,#d0d0d0 2px,transparent 2px,transparent 4px)"></div>
<span class="t" style="top:175.5px;height:20px;line-height:20px;font-size:14.4px;color:#0000ff;letter-spacing:0.051px;font-weight:bold;left:759.5px;">Hàng hóa</span>
<div style="left:831px;top:174px;width:328px;height:24px;border:1px solid #ababab;background:#fff"></div>
<span class="t" style="top:175.8px;height:20px;line-height:20px;font-size:14px;color:#000;letter-spacing:-0.301px;left:836px;">BM21, TenHangHoa</span>
<svg style="left:1146px;top:184px" width="8" height="5" viewBox="0 0 8 5"><path d="M0.5 0.5h7L4 4.5z" fill="#000"/></svg>
<div style="left:1170px;top:172px;width:1px;height:29px;background:repeating-linear-gradient(180deg,#d0d0d0 0,#d0d0d0 2px,transparent 2px,transparent 4px)"></div>
<div style="left:1246px;top:172px;width:1px;height:29px;background:repeating-linear-gradient(180deg,#d0d0d0 0,#d0d0d0 2px,transparent 2px,transparent 4px)"></div>
<div style="left:1363px;top:172px;width:1px;height:29px;background:repeating-linear-gradient(180deg,#d0d0d0 0,#d0d0d0 2px,transparent 2px,transparent 4px)"></div>
<svg style="left:1182px;top:177px" width="18" height="18" viewBox="0 0 18 18"><path d="M11.200 11.400L15.200 15.400" stroke="#c9803f" stroke-width="2.600" stroke-linecap="round"/><circle cx="7" cy="7.200" r="5.500" fill="#d4e8fa" stroke="#8aa3cb" stroke-width="1.700"/><circle cx="7" cy="7.200" r="3.800" fill="#e8f4ff" stroke="#bcd6f0" stroke-width="0.8"/></svg>
<span class="t" style="top:175.5px;height:20px;line-height:20px;font-size:14.4px;color:#0000ff;letter-spacing:0.194px;font-weight:bold;left:1203px;">Xem</span>
<svg style="left:1259px;top:177px" width="16" height="17" viewBox="0 0 16 17"><rect x="1.700" y="1.700" width="12.600" height="13.200" rx="1.800" fill="#2a9a2a" stroke="#136413" stroke-width="1"/><rect x="3.300" y="3.400" width="9.400" height="9.600" fill="#e4f0de"/><path d="M5 5.200L11 11.400M11 5.200L5 11.400" stroke="#1c7c1c" stroke-width="2"/></svg>
<span class="t" style="top:175.5px;height:20px;line-height:20px;font-size:14.4px;color:#0000ff;letter-spacing:-0.033px;font-weight:bold;left:1279px;">Xuất Excel</span>
<svg style="left:1376px;top:177px" width="17" height="17" viewBox="0 0 17 17"><rect x="4.500" y="1.600" width="7.800" height="5.800" fill="#fff" stroke="#7d8fb5" stroke-width="1"/><rect x="1.700" y="6.400" width="13.300" height="6" rx="1.500" fill="#b5c3e0" stroke="#6f80a8" stroke-width="1"/><rect x="4.500" y="10.200" width="7.800" height="5" fill="#fff" stroke="#7d8fb5" stroke-width="1"/><path d="M6 12.200h4.800M6 13.800h4.800" stroke="#8fb0e0" stroke-width="0.8"/></svg>
<span class="t" style="top:175.5px;height:20px;line-height:20px;font-size:14.4px;color:#0000ff;letter-spacing:0.125px;font-weight:bold;left:1396.5px;">In danh sách</span>
<svg style="left:329px;top:204px;" width="1262" height="23"><rect width="1262" height="23" fill="#fff"/><rect width="1262" height="23" fill="url(#hp2)"/></svg>
<div style="left:329px;top:204px;width:1262px;height:1px;background:repeating-linear-gradient(90deg,#d0d0d0 0,#d0d0d0 3px,transparent 3px,transparent 5px)"></div>
<div style="left:329px;top:226px;width:1262px;height:1px;background:repeating-linear-gradient(90deg,#d0d0d0 0,#d0d0d0 3px,transparent 3px,transparent 5px)"></div>
<div style="left:329px;top:204px;width:1px;height:23px;background:repeating-linear-gradient(180deg,#d0d0d0 0,#d0d0d0 3px,transparent 3px,transparent 5px)"></div>
<div style="left:1591px;top:168px;width:1px;height:729px;background:repeating-linear-gradient(180deg,#cccccc 0,#cccccc 3px,transparent 3px,transparent 6px)"></div>
<div style="left:328px;top:896px;width:1264px;height:1px;background:repeating-linear-gradient(90deg,#cccccc 0,#cccccc 3px,transparent 3px,transparent 6px)"></div>
<span class="t" style="top:206.0px;height:20px;line-height:20px;font-size:14.4px;color:#000;letter-spacing:0.243px;font-weight:bold;left:340.5px;">THỐNG KÊ CHI TIẾT TỒN</span>
<div style="left:333px;top:231px;width:1254px;height:661px;border:1px solid #ababab;background:#fff"></div>
<svg style="left:334px;top:232px;" width="1252" height="24"><rect width="1252" height="24" fill="#fff"/><rect width="1252" height="24" fill="url(#hp)"/></svg>
<div style="left:334px;top:256px;width:1252px;height:1px;background:#ababab"></div>
<div style="left:334px;top:282px;width:1252px;height:2px;background:#ababab"></div>
<div style="left:363px;top:232px;width:1px;height:24px;background:#ababab"></div>
<div style="left:363px;top:257px;width:1px;height:25px;background:#d6d6d6"></div>
<span class="t" style="top:234.7px;height:18px;line-height:18px;font-size:13px;color:#000;letter-spacing:-0.085px;font-weight:bold;left:368.3px;">Chứng từ</span>
<div style="left:487px;top:232px;width:1px;height:24px;background:#ababab"></div>
<div style="left:487px;top:257px;width:1px;height:25px;background:#d6d6d6"></div>
<span class="t" style="top:234.7px;height:18px;line-height:18px;font-size:13px;color:#000;letter-spacing:0.053px;font-weight:bold;left:492.3px;">Ngày</span>
<div style="left:587px;top:232px;width:1px;height:24px;background:#ababab"></div>
<div style="left:587px;top:257px;width:1px;height:25px;background:#d6d6d6"></div>
<span class="t" style="top:234.7px;height:18px;line-height:18px;font-size:13px;color:#000;letter-spacing:-0.010px;font-weight:bold;left:592.3px;">Khách hàng</span>
<div style="left:782px;top:232px;width:1px;height:24px;background:#ababab"></div>
<div style="left:782px;top:257px;width:1px;height:25px;background:#d6d6d6"></div>
<span class="t" style="top:234.7px;height:18px;line-height:18px;font-size:13px;color:#000;letter-spacing:0.046px;font-weight:bold;left:787.3px;">Diễn giải</span>
<div style="left:961px;top:232px;width:1px;height:24px;background:#ababab"></div>
<div style="left:961px;top:257px;width:1px;height:25px;background:#d6d6d6"></div>
<span class="t" style="top:234.7px;height:18px;line-height:18px;font-size:13px;color:#000;letter-spacing:0.632px;font-weight:bold;left:966.3px;">Xuất</span>
<div style="left:1047px;top:232px;width:1px;height:24px;background:#ababab"></div>
<div style="left:1047px;top:257px;width:1px;height:25px;background:#d6d6d6"></div>
<span class="t" style="top:234.7px;height:18px;line-height:18px;font-size:13px;color:#000;letter-spacing:-0.200px;font-weight:bold;left:1052.3px;">Nhập</span>
<div style="left:1126px;top:232px;width:1px;height:24px;background:#ababab"></div>
<div style="left:1126px;top:257px;width:1px;height:25px;background:#d6d6d6"></div>
<span class="t" style="top:234.7px;height:18px;line-height:18px;font-size:13px;color:#000;letter-spacing:0.144px;font-weight:bold;left:1131.3px;">Điều chỉnh tồn</span>
<div style="left:1249px;top:232px;width:1px;height:24px;background:#ababab"></div>
<div style="left:1249px;top:257px;width:1px;height:25px;background:#d6d6d6"></div>
<span class="t" style="top:234.7px;height:18px;line-height:18px;font-size:13px;color:#000;letter-spacing:-0.124px;font-weight:bold;left:1254.3px;">Đơn giá</span>
<div style="left:1372px;top:232px;width:1px;height:24px;background:#ababab"></div>
<div style="left:1372px;top:257px;width:1px;height:25px;background:#d6d6d6"></div>
<span class="t" style="top:234.7px;height:18px;line-height:18px;font-size:13px;color:#000;letter-spacing:0.188px;font-weight:bold;left:1377.3px;">Thành tiền</span>
<div style="left:1510px;top:232px;width:1px;height:24px;background:#ababab"></div>
<div style="left:1510px;top:257px;width:1px;height:25px;background:#d6d6d6"></div>
<span class="t" style="top:234.7px;height:18px;line-height:18px;font-size:13px;color:#000;letter-spacing:0.233px;font-weight:bold;left:1515.3px;">Lũy tiến</span>
<svg style="left:334px;top:257px;" width="29" height="416"><rect width="29" height="416" fill="#fff"/><rect width="29" height="416" fill="url(#hp)"/></svg>
<div style="left:334px;top:282px;width:29px;height:2px;background:#ababab"></div>
<div style="left:363px;top:232px;width:1px;height:441px;background:#ababab"></div>
<svg style="left:338px;top:264.8px" width="8" height="10" viewBox="-1 -1 8 10"><ellipse cx="2.500" cy="1.600" rx="2.600" ry="1.700" fill="#000"/><path d="M0.200 2.200H4.800L2.500 5.200Z" fill="#000"/><rect x="1.900" y="3" width="1.200" height="4.400" fill="#000"/><ellipse cx="2.500" cy="1.400" rx="1.300" ry="0.450" fill="#fff"/></svg>
<svg style="left:368px;top:263px" width="18" height="13" viewBox="0 0 18 13"><rect x="5.100" y="1.100" width="6.800" height="10.700" rx="0.9" fill="#0f9a26"/><rect x="6.900" y="4" width="3.300" height="5.200" rx="0.4" fill="#fff"/><rect x="8" y="5.100" width="1.100" height="1.100" fill="#0f9a26"/><rect x="8" y="7.100" width="1.100" height="1.100" fill="#0f9a26"/><path d="M1.400 9V5.100Q1.400 4.500 2 4.500H2.900Q3.500 4.500 3.500 5.100V9M1.400 6.900H3.500" stroke="#5c5c5c" stroke-width="1" fill="none"/><path d="M15.900 4.500H14.200Q13.600 4.500 13.600 5.100V7.900Q13.600 8.500 14.200 8.500H15.900" stroke="#5c5c5c" stroke-width="1" fill="none"/></svg>
<div style="left:496px;top:267px;width:9px;height:1px;background:#777"></div><div style="left:496px;top:270px;width:9px;height:1px;background:#777"></div>
<svg style="left:592px;top:263px" width="18" height="13" viewBox="0 0 18 13"><rect x="5.100" y="1.100" width="6.800" height="10.700" rx="0.9" fill="#0f9a26"/><rect x="6.900" y="4" width="3.300" height="5.200" rx="0.4" fill="#fff"/><rect x="8" y="5.100" width="1.100" height="1.100" fill="#0f9a26"/><rect x="8" y="7.100" width="1.100" height="1.100" fill="#0f9a26"/><path d="M1.400 9V5.100Q1.400 4.500 2 4.500H2.900Q3.500 4.500 3.500 5.100V9M1.400 6.900H3.500" stroke="#5c5c5c" stroke-width="1" fill="none"/><path d="M15.900 4.500H14.200Q13.600 4.500 13.600 5.100V7.900Q13.600 8.500 14.200 8.500H15.900" stroke="#5c5c5c" stroke-width="1" fill="none"/></svg>
<svg style="left:787px;top:263px" width="18" height="13" viewBox="0 0 18 13"><rect x="5.100" y="1.100" width="6.800" height="10.700" rx="0.9" fill="#0f9a26"/><rect x="6.900" y="4" width="3.300" height="5.200" rx="0.4" fill="#fff"/><rect x="8" y="5.100" width="1.100" height="1.100" fill="#0f9a26"/><rect x="8" y="7.100" width="1.100" height="1.100" fill="#0f9a26"/><path d="M1.400 9V5.100Q1.400 4.500 2 4.500H2.900Q3.500 4.500 3.500 5.100V9M1.400 6.900H3.500" stroke="#5c5c5c" stroke-width="1" fill="none"/><path d="M15.900 4.500H14.200Q13.600 4.500 13.600 5.100V7.900Q13.600 8.500 14.200 8.500H15.900" stroke="#5c5c5c" stroke-width="1" fill="none"/></svg>
<div style="left:970px;top:267px;width:9px;height:1px;background:#777"></div><div style="left:970px;top:270px;width:9px;height:1px;background:#777"></div>
<div style="left:1056px;top:267px;width:9px;height:1px;background:#777"></div><div style="left:1056px;top:270px;width:9px;height:1px;background:#777"></div>
<div style="left:1135px;top:267px;width:9px;height:1px;background:#777"></div><div style="left:1135px;top:270px;width:9px;height:1px;background:#777"></div>
<div style="left:1258px;top:267px;width:9px;height:1px;background:#777"></div><div style="left:1258px;top:270px;width:9px;height:1px;background:#777"></div>
<div style="left:1381px;top:267px;width:9px;height:1px;background:#777"></div><div style="left:1381px;top:270px;width:9px;height:1px;background:#777"></div>
<div style="left:1519px;top:267px;width:9px;height:1px;background:#777"></div><div style="left:1519px;top:270px;width:9px;height:1px;background:#777"></div>
<div style="left:364px;top:284px;width:1222px;height:25px;background:#00ff7f"></div>
<div style="left:364px;top:284px;width:123px;height:25px;background:linear-gradient(90deg,#ffff00 0,#ffff30 40%,#ffffc8 100%);border:1px dotted #ff0000"></div>
<div style="left:364px;top:309px;width:1222px;height:1px;background:#d6d6d6"></div>
<div style="left:334px;top:309px;width:29px;height:1px;background:#ababab"></div>
<span class="t" style="top:286.0px;height:20px;line-height:20px;font-size:14.4px;color:#0000ff;letter-spacing:0.071px;font-weight:bold;left:787.3px;">Tồn đầu kỳ</span>
<span class="t" style="top:286.3px;height:20px;line-height:20px;font-size:14.4px;color:#0000ff;font-weight:bold;right:876.2px;text-align:right;letter-spacing:0.25px;margin-right:-0.25px;">0.</span>
<span class="t" style="top:286.3px;height:20px;line-height:20px;font-size:14.4px;color:#0000ff;font-weight:bold;right:797.2px;text-align:right;letter-spacing:0.25px;margin-right:-0.25px;">0.</span>
<span class="t" style="top:286.3px;height:20px;line-height:20px;font-size:14.4px;color:#0000ff;font-weight:bold;right:674.2px;text-align:right;letter-spacing:0.25px;margin-right:-0.25px;">0.</span>
<span class="t" style="top:286.3px;height:20px;line-height:20px;font-size:14.4px;color:#0000ff;font-weight:bold;right:337.20000000000005px;text-align:right;letter-spacing:0.25px;margin-right:-0.25px;">0.</span>
<div style="left:364px;top:335px;width:1222px;height:1px;background:#d6d6d6"></div>
<div style="left:334px;top:335px;width:29px;height:1px;background:#ababab"></div>
<span class="t" style="top:312.0px;height:20px;line-height:20px;font-size:14px;color:#000;letter-spacing:-0.188px;left:368.3px;">PMH00001-1907...</span>
<span class="t" style="top:312.0px;height:20px;line-height:20px;font-size:14px;color:#000;letter-spacing:0.324px;left:492.3px;">19/07/2023</span>
<span class="t" style="top:312.0px;height:20px;line-height:20px;font-size:14px;color:#000;letter-spacing:-0.151px;left:592.3px;">Công ty TNHH Thương mại ...</span>
<span class="t" style="top:312.0px;height:20px;line-height:20px;font-size:14px;color:#000;letter-spacing:-0.308px;left:787.3px;">Mua hàng</span>
<span class="t" style="top:312.3px;height:20px;line-height:20px;font-size:14px;color:#000;right:876.2px;text-align:right;letter-spacing:0.25px;margin-right:-0.25px;">0.</span>
<span class="t" style="top:312.3px;height:20px;line-height:20px;font-size:14px;color:#000;right:797.2px;text-align:right;letter-spacing:0.25px;margin-right:-0.25px;">100.</span>
<span class="t" style="top:312.3px;height:20px;line-height:20px;font-size:14px;color:#000;right:674.2px;text-align:right;letter-spacing:0.25px;margin-right:-0.25px;">0.</span>
<span class="t" style="top:312.3px;height:20px;line-height:20px;font-size:14px;color:#000;right:551.2px;text-align:right;letter-spacing:0.25px;margin-right:-0.25px;">6,820.</span>
<span class="t" style="top:312.3px;height:20px;line-height:20px;font-size:14px;color:#000;right:413.20000000000005px;text-align:right;letter-spacing:0.25px;margin-right:-0.25px;">538,780.</span>
<span class="t" style="top:312.3px;height:20px;line-height:20px;font-size:14px;color:#000;right:337.20000000000005px;text-align:right;letter-spacing:0.25px;margin-right:-0.25px;">100.</span>
<div style="left:364px;top:361px;width:1222px;height:1px;background:#d6d6d6"></div>
<div style="left:334px;top:361px;width:29px;height:1px;background:#ababab"></div>
<span class="t" style="top:338.0px;height:20px;line-height:20px;font-size:14px;color:#000;letter-spacing:-0.050px;left:368.3px;">KTH00001-1907...</span>
<span class="t" style="top:338.0px;height:20px;line-height:20px;font-size:14px;color:#000;letter-spacing:0.324px;left:492.3px;">19/07/2023</span>
<span class="t" style="top:338.0px;height:20px;line-height:20px;font-size:14px;color:#000;letter-spacing:-0.282px;left:592.3px;">Nguyễn Văn Sáng</span>
<span class="t" style="top:338.0px;height:20px;line-height:20px;font-size:14px;color:#000;letter-spacing:-0.097px;left:787.3px;">Khách trả hàng</span>
<span class="t" style="top:338.3px;height:20px;line-height:20px;font-size:14px;color:#000;right:876.2px;text-align:right;letter-spacing:0.25px;margin-right:-0.25px;">0.</span>
<span class="t" style="top:338.3px;height:20px;line-height:20px;font-size:14px;color:#000;right:797.2px;text-align:right;letter-spacing:0.25px;margin-right:-0.25px;">10.</span>
<span class="t" style="top:338.3px;height:20px;line-height:20px;font-size:14px;color:#000;right:674.2px;text-align:right;letter-spacing:0.25px;margin-right:-0.25px;">0.</span>
<span class="t" style="top:338.3px;height:20px;line-height:20px;font-size:14px;color:#000;right:551.2px;text-align:right;letter-spacing:0.25px;margin-right:-0.25px;">6,820.</span>
<span class="t" style="top:338.3px;height:20px;line-height:20px;font-size:14px;color:#000;right:413.20000000000005px;text-align:right;letter-spacing:0.25px;margin-right:-0.25px;">53,878.</span>
<span class="t" style="top:338.3px;height:20px;line-height:20px;font-size:14px;color:#000;right:337.20000000000005px;text-align:right;letter-spacing:0.25px;margin-right:-0.25px;">110.</span>
<div style="left:364px;top:387px;width:1222px;height:1px;background:#d6d6d6"></div>
<div style="left:334px;top:387px;width:29px;height:1px;background:#ababab"></div>
<span class="t" style="top:364.0px;height:20px;line-height:20px;font-size:14px;color:#000;letter-spacing:-0.245px;left:368.3px;">PMH00003-2510...</span>
<span class="t" style="top:364.0px;height:20px;line-height:20px;font-size:14px;color:#000;letter-spacing:0.324px;left:492.3px;">25/10/2023</span>
<span class="t" style="top:364.0px;height:20px;line-height:20px;font-size:14px;color:#000;letter-spacing:-0.151px;left:592.3px;">Công ty TNHH Thương mại ...</span>
<span class="t" style="top:364.0px;height:20px;line-height:20px;font-size:14px;color:#000;letter-spacing:-0.308px;left:787.3px;">Mua hàng</span>
<span class="t" style="top:364.3px;height:20px;line-height:20px;font-size:14px;color:#000;right:876.2px;text-align:right;letter-spacing:0.25px;margin-right:-0.25px;">0.</span>
<span class="t" style="top:364.3px;height:20px;line-height:20px;font-size:14px;color:#000;right:797.2px;text-align:right;letter-spacing:0.25px;margin-right:-0.25px;">1.</span>
<span class="t" style="top:364.3px;height:20px;line-height:20px;font-size:14px;color:#000;right:674.2px;text-align:right;letter-spacing:0.25px;margin-right:-0.25px;">0.</span>
<span class="t" style="top:364.3px;height:20px;line-height:20px;font-size:14px;color:#000;right:551.2px;text-align:right;letter-spacing:0.25px;margin-right:-0.25px;">6,820.</span>
<span class="t" style="top:364.3px;height:20px;line-height:20px;font-size:14px;color:#000;right:413.20000000000005px;text-align:right;letter-spacing:0.25px;margin-right:-0.25px;">5,387.8</span>
<span class="t" style="top:364.3px;height:20px;line-height:20px;font-size:14px;color:#000;right:337.20000000000005px;text-align:right;letter-spacing:0.25px;margin-right:-0.25px;">111.</span>
<div style="left:364px;top:413px;width:1222px;height:1px;background:#d6d6d6"></div>
<div style="left:334px;top:413px;width:29px;height:1px;background:#ababab"></div>
<span class="t" style="top:390.0px;height:20px;line-height:20px;font-size:14px;color:#000;letter-spacing:-0.098px;left:368.3px;">THN00002-2510...</span>
<span class="t" style="top:390.0px;height:20px;line-height:20px;font-size:14px;color:#000;letter-spacing:0.324px;left:492.3px;">25/10/2023</span>
<span class="t" style="top:390.0px;height:20px;line-height:20px;font-size:14px;color:#000;letter-spacing:-0.151px;left:592.3px;">Công ty TNHH Thương mại ...</span>
<span class="t" style="top:390.0px;height:20px;line-height:20px;font-size:14px;color:#000;letter-spacing:-0.118px;left:787.3px;">Trả hàng Ncc</span>
<span class="t" style="top:390.3px;height:20px;line-height:20px;font-size:14px;color:#000;right:876.2px;text-align:right;letter-spacing:0.25px;margin-right:-0.25px;">1.</span>
<span class="t" style="top:390.3px;height:20px;line-height:20px;font-size:14px;color:#000;right:797.2px;text-align:right;letter-spacing:0.25px;margin-right:-0.25px;">0.</span>
<span class="t" style="top:390.3px;height:20px;line-height:20px;font-size:14px;color:#000;right:674.2px;text-align:right;letter-spacing:0.25px;margin-right:-0.25px;">0.</span>
<span class="t" style="top:390.3px;height:20px;line-height:20px;font-size:14px;color:#000;right:551.2px;text-align:right;letter-spacing:0.25px;margin-right:-0.25px;">6,820.</span>
<span class="t" style="top:390.3px;height:20px;line-height:20px;font-size:14px;color:#000;right:413.20000000000005px;text-align:right;letter-spacing:0.25px;margin-right:-0.25px;">5,387.8</span>
<span class="t" style="top:390.3px;height:20px;line-height:20px;font-size:14px;color:#000;right:337.20000000000005px;text-align:right;letter-spacing:0.25px;margin-right:-0.25px;">110.</span>
<div style="left:364px;top:439px;width:1222px;height:1px;background:#d6d6d6"></div>
<div style="left:334px;top:439px;width:29px;height:1px;background:#ababab"></div>
<span class="t" style="top:416.0px;height:20px;line-height:20px;font-size:14px;color:#000;letter-spacing:-0.099px;left:368.3px;">PBH00002-2510...</span>
<span class="t" style="top:416.0px;height:20px;line-height:20px;font-size:14px;color:#000;letter-spacing:0.324px;left:492.3px;">25/10/2023</span>
<span class="t" style="top:416.0px;height:20px;line-height:20px;font-size:14px;color:#000;letter-spacing:-0.282px;left:592.3px;">Nguyễn Văn Sáng</span>
<span class="t" style="top:416.0px;height:20px;line-height:20px;font-size:14px;color:#000;letter-spacing:-0.318px;left:787.3px;">Bán hàng</span>
<span class="t" style="top:416.3px;height:20px;line-height:20px;font-size:14px;color:#000;right:876.2px;text-align:right;letter-spacing:0.25px;margin-right:-0.25px;">10.</span>
<span class="t" style="top:416.3px;height:20px;line-height:20px;font-size:14px;color:#000;right:797.2px;text-align:right;letter-spacing:0.25px;margin-right:-0.25px;">0.</span>
<span class="t" style="top:416.3px;height:20px;line-height:20px;font-size:14px;color:#000;right:674.2px;text-align:right;letter-spacing:0.25px;margin-right:-0.25px;">0.</span>
<span class="t" style="top:416.3px;height:20px;line-height:20px;font-size:14px;color:#000;right:551.2px;text-align:right;letter-spacing:0.25px;margin-right:-0.25px;">6,820.</span>
<span class="t" style="top:416.3px;height:20px;line-height:20px;font-size:14px;color:#000;right:413.20000000000005px;text-align:right;letter-spacing:0.25px;margin-right:-0.25px;">68,200.</span>
<span class="t" style="top:416.3px;height:20px;line-height:20px;font-size:14px;color:#000;right:337.20000000000005px;text-align:right;letter-spacing:0.25px;margin-right:-0.25px;">100.</span>
<div style="left:364px;top:465px;width:1222px;height:1px;background:#d6d6d6"></div>
<div style="left:334px;top:465px;width:29px;height:1px;background:#ababab"></div>
<span class="t" style="top:442.0px;height:20px;line-height:20px;font-size:14px;color:#000;letter-spacing:-0.050px;left:368.3px;">KTH00002-2510...</span>
<span class="t" style="top:442.0px;height:20px;line-height:20px;font-size:14px;color:#000;letter-spacing:0.324px;left:492.3px;">25/10/2023</span>
<span class="t" style="top:442.0px;height:20px;line-height:20px;font-size:14px;color:#000;letter-spacing:-0.282px;left:592.3px;">Nguyễn Văn Sáng</span>
<span class="t" style="top:442.0px;height:20px;line-height:20px;font-size:14px;color:#000;letter-spacing:-0.097px;left:787.3px;">Khách trả hàng</span>
<span class="t" style="top:442.3px;height:20px;line-height:20px;font-size:14px;color:#000;right:876.2px;text-align:right;letter-spacing:0.25px;margin-right:-0.25px;">0.</span>
<span class="t" style="top:442.3px;height:20px;line-height:20px;font-size:14px;color:#000;right:797.2px;text-align:right;letter-spacing:0.25px;margin-right:-0.25px;">1.</span>
<span class="t" style="top:442.3px;height:20px;line-height:20px;font-size:14px;color:#000;right:674.2px;text-align:right;letter-spacing:0.25px;margin-right:-0.25px;">0.</span>
<span class="t" style="top:442.3px;height:20px;line-height:20px;font-size:14px;color:#000;right:551.2px;text-align:right;letter-spacing:0.25px;margin-right:-0.25px;">6,820.</span>
<span class="t" style="top:442.3px;height:20px;line-height:20px;font-size:14px;color:#000;right:413.20000000000005px;text-align:right;letter-spacing:0.25px;margin-right:-0.25px;">5,387.8</span>
<span class="t" style="top:442.3px;height:20px;line-height:20px;font-size:14px;color:#000;right:337.20000000000005px;text-align:right;letter-spacing:0.25px;margin-right:-0.25px;">101.</span>
<div style="left:364px;top:491px;width:1222px;height:1px;background:#d6d6d6"></div>
<div style="left:334px;top:491px;width:29px;height:1px;background:#ababab"></div>
<span class="t" style="top:468.0px;height:20px;line-height:20px;font-size:14px;color:#000;letter-spacing:-0.099px;left:368.3px;">XCK00001-2510...</span>
<span class="t" style="top:468.0px;height:20px;line-height:20px;font-size:14px;color:#000;letter-spacing:0.324px;left:492.3px;">25/10/2023</span>
<span class="t" style="top:468.0px;height:20px;line-height:20px;font-size:14px;color:#000;letter-spacing:-0.508px;left:592.3px;">Phạm Minh Hải</span>
<span class="t" style="top:468.0px;height:20px;line-height:20px;font-size:14px;color:#000;letter-spacing:0.027px;left:787.3px;">Xuất chuyển kho</span>
<span class="t" style="top:468.3px;height:20px;line-height:20px;font-size:14px;color:#000;right:876.2px;text-align:right;letter-spacing:0.25px;margin-right:-0.25px;">12.</span>
<span class="t" style="top:468.3px;height:20px;line-height:20px;font-size:14px;color:#000;right:797.2px;text-align:right;letter-spacing:0.25px;margin-right:-0.25px;">0.</span>
<span class="t" style="top:468.3px;height:20px;line-height:20px;font-size:14px;color:#000;right:674.2px;text-align:right;letter-spacing:0.25px;margin-right:-0.25px;">0.</span>
<span class="t" style="top:468.3px;height:20px;line-height:20px;font-size:14px;color:#000;right:551.2px;text-align:right;letter-spacing:0.25px;margin-right:-0.25px;">6,820.</span>
<span class="t" style="top:468.3px;height:20px;line-height:20px;font-size:14px;color:#000;right:413.20000000000005px;text-align:right;letter-spacing:0.25px;margin-right:-0.25px;">81,840.</span>
<span class="t" style="top:468.3px;height:20px;line-height:20px;font-size:14px;color:#000;right:337.20000000000005px;text-align:right;letter-spacing:0.25px;margin-right:-0.25px;">89.</span>
<div style="left:364px;top:517px;width:1222px;height:1px;background:#d6d6d6"></div>
<div style="left:334px;top:517px;width:29px;height:1px;background:#ababab"></div>
<span class="t" style="top:494.0px;height:20px;line-height:20px;font-size:14px;color:#000;letter-spacing:-0.099px;left:368.3px;">XCK00002-2510...</span>
<span class="t" style="top:494.0px;height:20px;line-height:20px;font-size:14px;color:#000;letter-spacing:0.324px;left:492.3px;">25/10/2023</span>
<span class="t" style="top:494.0px;height:20px;line-height:20px;font-size:14px;color:#000;letter-spacing:-0.270px;left:592.3px;">Danh Xuân Thừa</span>
<span class="t" style="top:494.0px;height:20px;line-height:20px;font-size:14px;color:#000;letter-spacing:0.027px;left:787.3px;">Xuất chuyển kho</span>
<span class="t" style="top:494.3px;height:20px;line-height:20px;font-size:14px;color:#000;right:876.2px;text-align:right;letter-spacing:0.25px;margin-right:-0.25px;">1.</span>
<span class="t" style="top:494.3px;height:20px;line-height:20px;font-size:14px;color:#000;right:797.2px;text-align:right;letter-spacing:0.25px;margin-right:-0.25px;">0.</span>
<span class="t" style="top:494.3px;height:20px;line-height:20px;font-size:14px;color:#000;right:674.2px;text-align:right;letter-spacing:0.25px;margin-right:-0.25px;">0.</span>
<span class="t" style="top:494.3px;height:20px;line-height:20px;font-size:14px;color:#000;right:551.2px;text-align:right;letter-spacing:0.25px;margin-right:-0.25px;">6,820.</span>
<span class="t" style="top:494.3px;height:20px;line-height:20px;font-size:14px;color:#000;right:413.20000000000005px;text-align:right;letter-spacing:0.25px;margin-right:-0.25px;">6,820.</span>
<span class="t" style="top:494.3px;height:20px;line-height:20px;font-size:14px;color:#000;right:337.20000000000005px;text-align:right;letter-spacing:0.25px;margin-right:-0.25px;">88.</span>
<div style="left:364px;top:543px;width:1222px;height:1px;background:#d6d6d6"></div>
<div style="left:334px;top:543px;width:29px;height:1px;background:#ababab"></div>
<span class="t" style="top:520.0px;height:20px;line-height:20px;font-size:14px;color:#000;letter-spacing:-0.099px;left:368.3px;">XCK00005-2510...</span>
<span class="t" style="top:520.0px;height:20px;line-height:20px;font-size:14px;color:#000;letter-spacing:0.324px;left:492.3px;">25/10/2023</span>
<span class="t" style="top:520.0px;height:20px;line-height:20px;font-size:14px;color:#000;letter-spacing:-0.508px;left:592.3px;">Phạm Minh Hải</span>
<span class="t" style="top:520.0px;height:20px;line-height:20px;font-size:14px;color:#000;letter-spacing:0.027px;left:787.3px;">Xuất chuyển kho</span>
<span class="t" style="top:520.3px;height:20px;line-height:20px;font-size:14px;color:#000;right:876.2px;text-align:right;letter-spacing:0.25px;margin-right:-0.25px;">8.</span>
<span class="t" style="top:520.3px;height:20px;line-height:20px;font-size:14px;color:#000;right:797.2px;text-align:right;letter-spacing:0.25px;margin-right:-0.25px;">0.</span>
<span class="t" style="top:520.3px;height:20px;line-height:20px;font-size:14px;color:#000;right:674.2px;text-align:right;letter-spacing:0.25px;margin-right:-0.25px;">0.</span>
<span class="t" style="top:520.3px;height:20px;line-height:20px;font-size:14px;color:#000;right:551.2px;text-align:right;letter-spacing:0.25px;margin-right:-0.25px;">6,820.</span>
<span class="t" style="top:520.3px;height:20px;line-height:20px;font-size:14px;color:#000;right:413.20000000000005px;text-align:right;letter-spacing:0.25px;margin-right:-0.25px;">54,560.</span>
<span class="t" style="top:520.3px;height:20px;line-height:20px;font-size:14px;color:#000;right:337.20000000000005px;text-align:right;letter-spacing:0.25px;margin-right:-0.25px;">80.</span>
<div style="left:364px;top:569px;width:1222px;height:1px;background:#d6d6d6"></div>
<div style="left:334px;top:569px;width:29px;height:1px;background:#ababab"></div>
<span class="t" style="top:546.0px;height:20px;line-height:20px;font-size:14px;color:#000;letter-spacing:-0.104px;left:368.3px;">NCK00001-2510...</span>
<span class="t" style="top:546.0px;height:20px;line-height:20px;font-size:14px;color:#000;letter-spacing:0.324px;left:492.3px;">25/10/2023</span>
<span class="t" style="top:546.0px;height:20px;line-height:20px;font-size:14px;color:#000;letter-spacing:-0.508px;left:592.3px;">Phạm Minh Hải</span>
<span class="t" style="top:546.0px;height:20px;line-height:20px;font-size:14px;color:#000;letter-spacing:-0.024px;left:787.3px;">Nhập chuyển kho</span>
<span class="t" style="top:546.3px;height:20px;line-height:20px;font-size:14px;color:#000;right:876.2px;text-align:right;letter-spacing:0.25px;margin-right:-0.25px;">0.</span>
<span class="t" style="top:546.3px;height:20px;line-height:20px;font-size:14px;color:#000;right:797.2px;text-align:right;letter-spacing:0.25px;margin-right:-0.25px;">8.</span>
<span class="t" style="top:546.3px;height:20px;line-height:20px;font-size:14px;color:#000;right:674.2px;text-align:right;letter-spacing:0.25px;margin-right:-0.25px;">0.</span>
<span class="t" style="top:546.3px;height:20px;line-height:20px;font-size:14px;color:#000;right:551.2px;text-align:right;letter-spacing:0.25px;margin-right:-0.25px;">6,820.</span>
<span class="t" style="top:546.3px;height:20px;line-height:20px;font-size:14px;color:#000;right:413.20000000000005px;text-align:right;letter-spacing:0.25px;margin-right:-0.25px;">54,560.</span>
<span class="t" style="top:546.3px;height:20px;line-height:20px;font-size:14px;color:#000;right:337.20000000000005px;text-align:right;letter-spacing:0.25px;margin-right:-0.25px;">88.</span>
<div style="left:364px;top:595px;width:1222px;height:1px;background:#d6d6d6"></div>
<div style="left:334px;top:595px;width:29px;height:1px;background:#ababab"></div>
<span class="t" style="top:572.0px;height:20px;line-height:20px;font-size:14px;color:#000;letter-spacing:-0.104px;left:368.3px;">NCK00004-2510...</span>
<span class="t" style="top:572.0px;height:20px;line-height:20px;font-size:14px;color:#000;letter-spacing:0.324px;left:492.3px;">25/10/2023</span>
<span class="t" style="top:572.0px;height:20px;line-height:20px;font-size:14px;color:#000;letter-spacing:-0.270px;left:592.3px;">Danh Xuân Thừa</span>
<span class="t" style="top:572.0px;height:20px;line-height:20px;font-size:14px;color:#000;letter-spacing:-0.024px;left:787.3px;">Nhập chuyển kho</span>
<span class="t" style="top:572.3px;height:20px;line-height:20px;font-size:14px;color:#000;right:876.2px;text-align:right;letter-spacing:0.25px;margin-right:-0.25px;">0.</span>
<span class="t" style="top:572.3px;height:20px;line-height:20px;font-size:14px;color:#000;right:797.2px;text-align:right;letter-spacing:0.25px;margin-right:-0.25px;">1.</span>
<span class="t" style="top:572.3px;height:20px;line-height:20px;font-size:14px;color:#000;right:674.2px;text-align:right;letter-spacing:0.25px;margin-right:-0.25px;">0.</span>
<span class="t" style="top:572.3px;height:20px;line-height:20px;font-size:14px;color:#000;right:551.2px;text-align:right;letter-spacing:0.25px;margin-right:-0.25px;">6,820.</span>
<span class="t" style="top:572.3px;height:20px;line-height:20px;font-size:14px;color:#000;right:413.20000000000005px;text-align:right;letter-spacing:0.25px;margin-right:-0.25px;">6,820.</span>
<span class="t" style="top:572.3px;height:20px;line-height:20px;font-size:14px;color:#000;right:337.20000000000005px;text-align:right;letter-spacing:0.25px;margin-right:-0.25px;">89.</span>
<div style="left:364px;top:621px;width:1222px;height:1px;background:#d6d6d6"></div>
<div style="left:334px;top:621px;width:29px;height:1px;background:#ababab"></div>
<span class="t" style="top:598.0px;height:20px;line-height:20px;font-size:14px;color:#000;letter-spacing:-0.104px;left:368.3px;">NCK00005-2510...</span>
<span class="t" style="top:598.0px;height:20px;line-height:20px;font-size:14px;color:#000;letter-spacing:0.324px;left:492.3px;">25/10/2023</span>
<span class="t" style="top:598.0px;height:20px;line-height:20px;font-size:14px;color:#000;letter-spacing:-0.508px;left:592.3px;">Phạm Minh Hải</span>
<span class="t" style="top:598.0px;height:20px;line-height:20px;font-size:14px;color:#000;letter-spacing:-0.024px;left:787.3px;">Nhập chuyển kho</span>
<span class="t" style="top:598.3px;height:20px;line-height:20px;font-size:14px;color:#000;right:876.2px;text-align:right;letter-spacing:0.25px;margin-right:-0.25px;">0.</span>
<span class="t" style="top:598.3px;height:20px;line-height:20px;font-size:14px;color:#000;right:797.2px;text-align:right;letter-spacing:0.25px;margin-right:-0.25px;">12.</span>
<span class="t" style="top:598.3px;height:20px;line-height:20px;font-size:14px;color:#000;right:674.2px;text-align:right;letter-spacing:0.25px;margin-right:-0.25px;">0.</span>
<span class="t" style="top:598.3px;height:20px;line-height:20px;font-size:14px;color:#000;right:551.2px;text-align:right;letter-spacing:0.25px;margin-right:-0.25px;">6,820.</span>
<span class="t" style="top:598.3px;height:20px;line-height:20px;font-size:14px;color:#000;right:413.20000000000005px;text-align:right;letter-spacing:0.25px;margin-right:-0.25px;">81,840.</span>
<span class="t" style="top:598.3px;height:20px;line-height:20px;font-size:14px;color:#000;right:337.20000000000005px;text-align:right;letter-spacing:0.25px;margin-right:-0.25px;">101.</span>
<div style="left:364px;top:647px;width:1222px;height:1px;background:#d6d6d6"></div>
<div style="left:334px;top:647px;width:29px;height:1px;background:#ababab"></div>
<span class="t" style="top:624.0px;height:20px;line-height:20px;font-size:14px;color:#000;letter-spacing:-0.006px;left:368.3px;">DCT00001-251...</span>
<span class="t" style="top:624.0px;height:20px;line-height:20px;font-size:14px;color:#000;letter-spacing:0.324px;left:492.3px;">25/10/2023</span>
<span class="t" style="top:624.0px;height:20px;line-height:20px;font-size:14px;color:#000;letter-spacing:-0.064px;left:787.3px;">Điều chỉnh tồn</span>
<span class="t" style="top:624.3px;height:20px;line-height:20px;font-size:14px;color:#000;right:876.2px;text-align:right;letter-spacing:0.25px;margin-right:-0.25px;">0.</span>
<span class="t" style="top:624.3px;height:20px;line-height:20px;font-size:14px;color:#000;right:797.2px;text-align:right;letter-spacing:0.25px;margin-right:-0.25px;">0.</span>
<span class="t" style="top:624.3px;height:20px;line-height:20px;font-size:14px;color:#000;right:674.2px;text-align:right;letter-spacing:0.25px;margin-right:-0.25px;">0.</span>
<span class="t" style="top:624.3px;height:20px;line-height:20px;font-size:14px;color:#000;right:337.20000000000005px;text-align:right;letter-spacing:0.25px;margin-right:-0.25px;">101.</span>
<div style="left:364px;top:673px;width:1222px;height:1px;background:#d6d6d6"></div>
<div style="left:334px;top:673px;width:29px;height:1px;background:#ababab"></div>
<span class="t" style="top:650.0px;height:20px;line-height:20px;font-size:14px;color:#000;letter-spacing:-0.007px;left:787.3px;">Tồn cuối kỳ</span>
<span class="t" style="top:650.3px;height:20px;line-height:20px;font-size:14px;color:#000;right:876.2px;text-align:right;letter-spacing:0.25px;margin-right:-0.25px;">0.</span>
<span class="t" style="top:650.3px;height:20px;line-height:20px;font-size:14px;color:#000;right:797.2px;text-align:right;letter-spacing:0.25px;margin-right:-0.25px;">0.</span>
<span class="t" style="top:650.3px;height:20px;line-height:20px;font-size:14px;color:#000;right:674.2px;text-align:right;letter-spacing:0.25px;margin-right:-0.25px;">0.</span>
<span class="t" style="top:650.3px;height:20px;line-height:20px;font-size:14px;color:#000;right:337.20000000000005px;text-align:right;letter-spacing:0.25px;margin-right:-0.25px;">101.</span>
<div style="left:487px;top:284px;width:1px;height:389px;background:#d6d6d6"></div>
<div style="left:587px;top:284px;width:1px;height:389px;background:#d6d6d6"></div>
<div style="left:782px;top:284px;width:1px;height:389px;background:#d6d6d6"></div>
<div style="left:961px;top:284px;width:1px;height:389px;background:#d6d6d6"></div>
<div style="left:1047px;top:284px;width:1px;height:389px;background:#d6d6d6"></div>
<div style="left:1126px;top:284px;width:1px;height:389px;background:#d6d6d6"></div>
<div style="left:1249px;top:284px;width:1px;height:389px;background:#d6d6d6"></div>
<div style="left:1372px;top:284px;width:1px;height:389px;background:#d6d6d6"></div>
<div style="left:1510px;top:284px;width:1px;height:389px;background:#d6d6d6"></div>
<svg style="left:340px;top:292px" width="5" height="9" viewBox="0 0 5 9"><path d="M0.5 0.5v8L4.5 4.5z" fill="#000"/></svg>
<div style="left:334px;top:857px;width:1252px;height:1px;background:#ababab"></div>
<svg style="left:334px;top:858px;" width="1252" height="33"><rect width="1252" height="33" fill="#fff"/><rect width="1252" height="33" fill="url(#hp)"/></svg>
<div style="left:963px;top:860px;width:83px;height:30px;background:#fff;border:1px dashed #d0d0d0"></div>
<span class="t" style="top:865.0px;height:20px;line-height:20px;font-size:14.4px;color:#ff0000;letter-spacing:0.843px;font-weight:bold;right:878.5px;text-align:right;margin-right:-0.843px;">32</span>
<div style="left:1049px;top:860px;width:76px;height:30px;background:#fff;border:1px dashed #d0d0d0"></div>
<span class="t" style="top:865.0px;height:20px;line-height:20px;font-size:14.4px;color:#ff0000;letter-spacing:0.826px;font-weight:bold;right:799.5px;text-align:right;margin-right:-0.826px;">133</span>
<div style="left:1128px;top:860px;width:120px;height:30px;background:#fff;border:1px dashed #d0d0d0"></div>
<span class="t" style="top:865.0px;height:20px;line-height:20px;font-size:14.4px;color:#ff0000;font-weight:bold;right:676.5px;text-align:right;">0</span>
<svg style="left:868px;top:414px" width="18" height="25" viewBox="868 414 18 25"><path d="M871.500 417.400V433.200Q871.700 433.900 872.500 433.300L875.600 430.200L878 435Q879 436.200 880.300 435.400Q881 434.800 880.600 433.800L878.400 429.500H882.300Q883 429.300 882.600 428.600Z" fill="#fff" stroke="#1a1a22" stroke-width="1" stroke-linejoin="round"/></svg>
</div></body></html>
